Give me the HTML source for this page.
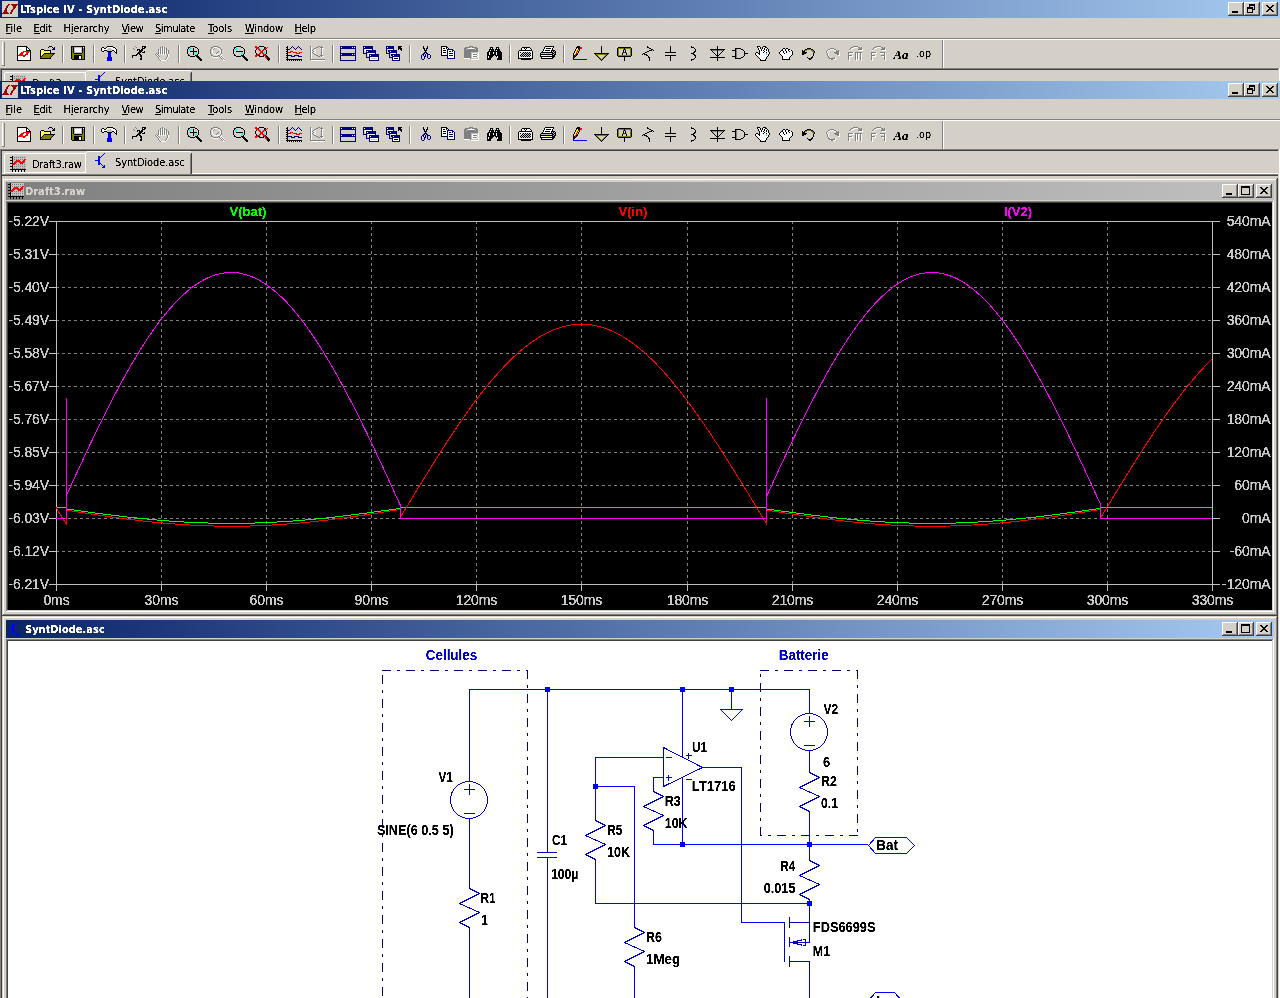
<!DOCTYPE html><html><head><meta charset="utf-8"><title>LTspice IV - SyntDiode.asc</title><style>
html,body{margin:0;padding:0;overflow:hidden}body{width:1280px;height:998px;overflow:hidden;background:#d4d0c8;position:relative}
#r{position:absolute;left:0;top:0;width:1280px;height:998px;overflow:hidden;background:#d4d0c8}
#r div,#r svg{position:absolute;display:block}
#r svg{overflow:hidden}
u{text-decoration:underline;text-underline-offset:1px}
.t{filter:url(#thr)}
</style></head><body><div id="r">
<svg width="0" height="0" style="left:0;top:0"><filter id="thr" color-interpolation-filters="sRGB"><feComponentTransfer><feFuncA type="linear" slope="3" intercept="-0.75"/></feComponentTransfer></filter><filter id="thr2" color-interpolation-filters="sRGB"><feComponentTransfer><feFuncA type="linear" slope="4" intercept="-0.7"/></feComponentTransfer></filter></svg>
<div style="left:0;top:0;width:1280px;height:81px;overflow:hidden"><div style="left:0px;top:0px;width:1280px;height:18px;background:linear-gradient(to right,#0a246a 0%,#a6caf0 100%);"></div><svg style="left:2px;top:1px" width="16" height="16" viewBox="0 0 16 16"><g shape-rendering="crispEdges"><rect x="0" y="0" width="16" height="16" fill="#d4d0c8"/></g><g shape-rendering="crispEdges"><path d="M6 3h2v1h-2zM9 3h7v1h-7zM5 4h2v1h-2zM10 4h5v1h-5zM4 5h2v1h-2zM11 5h3v1h-3zM4 6h2v1h-2zM11 6h3v1h-3zM3 7h2v1h-2zM11 7h2v1h-2zM3 8h2v1h-2zM10 8h2v1h-2zM2 9h3v1h-3zM9 9h2v1h-2zM2 10h3v1h-3zM9 10h2v1h-2zM1 11h5v1h-5zM8 11h2v1h-2zM0 12h7v1h-7zM8 12h2v1h-2z" fill="#a00000"/></g></svg><div class="t" style="left:20px;top:3px;font-family:'DejaVu Sans Condensed','DejaVu Sans','Liberation Sans',sans-serif;font-size:11px;color:#fff;white-space:nowrap;line-height:14px;height:14px;font-weight:bold;letter-spacing:0.12px;">LTspice IV - SyntDiode.asc</div><div style="left:1228px;top:2px;width:16px;height:14px;background:#d4d0c8;box-shadow:inset -1px -1px 0 #404040,inset 1px 1px 0 #fff,inset -2px -2px 0 #808080;"><div style="left:4px;top:9px;width:6px;height:2px;background:#000"></div></div><div style="left:1244px;top:2px;width:16px;height:14px;background:#d4d0c8;box-shadow:inset -1px -1px 0 #404040,inset 1px 1px 0 #fff,inset -2px -2px 0 #808080;"><div style="left:5px;top:2px;width:6px;height:6px;box-sizing:border-box;border:1px solid #000;border-top-width:2px"></div><div style="left:3px;top:5px;width:6px;height:6px;box-sizing:border-box;border:1px solid #000;border-top-width:2px;background:#d4d0c8"></div></div><div style="left:1262px;top:2px;width:16px;height:14px;background:#d4d0c8;box-shadow:inset -1px -1px 0 #404040,inset 1px 1px 0 #fff,inset -2px -2px 0 #808080;"><svg style="left:4px;top:3px" width="8" height="7" viewBox="0 0 8 7" shape-rendering="crispEdges"><path d="M0 0h2v1h1v1h2v-1h1v-1h2v1h-1v1h-1v1h-1v1h1v1h1v1h1v1h-2v-1h-1v-1h-2v1h-1v1h-2v-1h1v-1h1v-1h1v-1h-1v-1h-1v-1h-1z" fill="#000"/></svg></div><div class="t" style="left:5.5px;top:22px;font-family:'DejaVu Sans Condensed','DejaVu Sans','Liberation Sans',sans-serif;font-size:11px;color:#000;white-space:nowrap;line-height:14px;height:14px;">File</div><div style="left:6px;top:33px;width:5px;height:1px;background:#000;"></div><div class="t" style="left:33.5px;top:22px;font-family:'DejaVu Sans Condensed','DejaVu Sans','Liberation Sans',sans-serif;font-size:11px;color:#000;white-space:nowrap;line-height:14px;height:14px;letter-spacing:-0.3px;">Edit</div><div style="left:34px;top:33px;width:6px;height:1px;background:#000;"></div><div class="t" style="left:63.5px;top:22px;font-family:'DejaVu Sans Condensed','DejaVu Sans','Liberation Sans',sans-serif;font-size:11px;color:#000;white-space:nowrap;line-height:14px;height:14px;letter-spacing:-0.22px;">Hierarchy</div><div style="left:71px;top:33px;width:2px;height:1px;background:#000;"></div><div class="t" style="left:121.5px;top:22px;font-family:'DejaVu Sans Condensed','DejaVu Sans','Liberation Sans',sans-serif;font-size:11px;color:#000;white-space:nowrap;line-height:14px;height:14px;letter-spacing:-0.45px;">View</div><div style="left:122px;top:33px;width:6px;height:1px;background:#000;"></div><div class="t" style="left:155px;top:22px;font-family:'DejaVu Sans Condensed','DejaVu Sans','Liberation Sans',sans-serif;font-size:11px;color:#000;white-space:nowrap;line-height:14px;height:14px;letter-spacing:-0.5px;">Simulate</div><div style="left:155px;top:33px;width:6px;height:1px;background:#000;"></div><div class="t" style="left:208px;top:22px;font-family:'DejaVu Sans Condensed','DejaVu Sans','Liberation Sans',sans-serif;font-size:11px;color:#000;white-space:nowrap;line-height:14px;height:14px;">Tools</div><div style="left:208px;top:33px;width:6px;height:1px;background:#000;"></div><div class="t" style="left:245px;top:22px;font-family:'DejaVu Sans Condensed','DejaVu Sans','Liberation Sans',sans-serif;font-size:11px;color:#000;white-space:nowrap;line-height:14px;height:14px;letter-spacing:-0.2px;">Window</div><div style="left:245px;top:33px;width:9px;height:1px;background:#000;"></div><div class="t" style="left:294.5px;top:22px;font-family:'DejaVu Sans Condensed','DejaVu Sans','Liberation Sans',sans-serif;font-size:11px;color:#000;white-space:nowrap;line-height:14px;height:14px;letter-spacing:-0.35px;">Help</div><div style="left:295px;top:33px;width:7px;height:1px;background:#000;"></div><div style="left:0px;top:38px;width:1280px;height:1px;background:#808080;"></div><div style="left:0px;top:39px;width:1280px;height:1px;background:#fff;"></div><div style="left:2px;top:42px;width:1px;height:23px;background:#fff;"></div><div style="left:3px;top:42px;width:1px;height:23px;background:#d4d0c8;"></div><div style="left:4px;top:42px;width:1px;height:23px;background:#808080;"></div><div style="left:2px;top:65px;width:3px;height:1px;background:#808080;"></div><svg style="left:16px;top:46px" width="16" height="16" viewBox="0 0 16 16"><g shape-rendering="crispEdges"><path d="M1 0h10v1h-10zM1 1h1v1h-1zM10 1h2v1h-2zM1 2h1v1h-1zM10 2h1v1h-1zM12 2h1v1h-1zM1 3h1v1h-1zM10 3h1v1h-1zM13 3h1v1h-1zM1 4h1v1h-1zM10 4h5v1h-5zM1 5h1v1h-1zM14 5h1v1h-1zM1 6h1v1h-1zM14 6h1v1h-1zM1 7h1v1h-1zM14 7h1v1h-1zM1 8h1v1h-1zM14 8h1v1h-1zM1 9h1v1h-1zM14 9h1v1h-1zM1 10h1v1h-1zM14 10h1v1h-1zM1 11h1v1h-1zM14 11h1v1h-1zM1 12h1v1h-1zM14 12h1v1h-1zM1 13h1v1h-1zM14 13h1v1h-1zM1 14h14v1h-14z" fill="#000"/><path d="M2 1h8v1h-8zM2 2h8v1h-8zM11 2h1v1h-1zM2 3h8v1h-8zM11 3h2v1h-2zM2 4h8v1h-8zM2 5h5v1h-5zM2 6h3v1h-3zM8 6h2v1h-2zM13 6h1v1h-1zM2 7h2v1h-2zM7 7h3v1h-3zM12 7h2v1h-2zM2 8h1v1h-1zM7 8h2v1h-2zM12 8h2v1h-2zM10 9h4v1h-4zM2 10h5v1h-5zM9 10h5v1h-5zM2 11h12v1h-12zM2 12h12v1h-12zM2 13h12v1h-12z" fill="#fff"/><path d="M7 5h7v1h-7zM5 6h3v1h-3zM10 6h3v1h-3zM4 7h3v1h-3zM10 7h2v1h-2zM3 8h4v1h-4zM9 8h3v1h-3zM2 9h8v1h-8zM7 10h2v1h-2z" fill="#ff0000"/></g></svg><svg style="left:39px;top:46px" width="16" height="16" viewBox="0 0 16 16"><g shape-rendering="crispEdges"><path d="M10 0h3v1h-3zM9 1h1v1h-1zM13 1h1v1h-1zM15 1h1v1h-1zM14 2h2v1h-2zM2 3h3v1h-3zM13 3h3v1h-3zM1 4h1v1h-1zM5 4h7v1h-7zM1 5h1v1h-1zM11 5h1v1h-1zM1 6h1v1h-1zM11 6h1v1h-1zM1 7h1v1h-1zM5 7h11v1h-11zM1 8h1v1h-1zM4 8h1v1h-1zM14 8h1v1h-1zM1 9h1v1h-1zM3 9h1v1h-1zM13 9h1v1h-1zM1 10h2v1h-2zM12 10h1v1h-1zM1 11h1v1h-1zM11 11h1v1h-1zM1 12h11v1h-11z" fill="#000"/><path d="M2 4h1v1h-1zM4 4h1v1h-1zM3 5h1v1h-1zM5 5h1v1h-1zM7 5h1v1h-1zM9 5h1v1h-1zM2 6h1v1h-1zM4 6h1v1h-1zM6 6h1v1h-1zM8 6h1v1h-1zM10 6h1v1h-1zM3 7h1v1h-1zM2 8h1v1h-1z" fill="#ffffc0"/><path d="M3 4h1v1h-1zM2 5h1v1h-1zM4 5h1v1h-1zM6 5h1v1h-1zM8 5h1v1h-1zM10 5h1v1h-1zM3 6h1v1h-1zM5 6h1v1h-1zM7 6h1v1h-1zM9 6h1v1h-1zM2 7h1v1h-1zM4 7h1v1h-1zM3 8h1v1h-1zM2 9h1v1h-1z" fill="#ffff00"/><path d="M5 8h9v1h-9zM4 9h9v1h-9zM3 10h9v1h-9zM2 11h9v1h-9z" fill="#808000"/></g></svg><div style="left:62px;top:45px;width:1px;height:18px;background:#808080;"></div><div style="left:63px;top:45px;width:1px;height:18px;background:#fff;"></div><svg style="left:70px;top:46px" width="16" height="16" viewBox="0 0 16 16"><g shape-rendering="crispEdges"><path d="M1 0h14v1h-14zM1 1h1v1h-1zM3 1h1v1h-1zM12 1h1v1h-1zM14 1h1v1h-1zM1 2h1v1h-1zM3 2h1v1h-1zM12 2h1v1h-1zM14 2h1v1h-1zM1 3h1v1h-1zM3 3h1v1h-1zM12 3h1v1h-1zM14 3h1v1h-1zM1 4h1v1h-1zM3 4h1v1h-1zM12 4h1v1h-1zM14 4h1v1h-1zM1 5h1v1h-1zM3 5h1v1h-1zM12 5h1v1h-1zM14 5h1v1h-1zM1 6h1v1h-1zM3 6h1v1h-1zM12 6h1v1h-1zM14 6h1v1h-1zM1 7h1v1h-1zM4 7h8v1h-8zM14 7h1v1h-1zM1 8h1v1h-1zM14 8h1v1h-1zM1 9h1v1h-1zM4 9h8v1h-8zM14 9h1v1h-1zM1 10h1v1h-1zM4 10h5v1h-5zM11 10h1v1h-1zM14 10h1v1h-1zM1 11h1v1h-1zM4 11h5v1h-5zM11 11h1v1h-1zM14 11h1v1h-1zM1 12h1v1h-1zM4 12h5v1h-5zM11 12h1v1h-1zM14 12h1v1h-1zM2 13h13v1h-13z" fill="#000"/><path d="M2 1h1v1h-1zM2 2h1v1h-1zM13 2h1v1h-1zM2 3h1v1h-1zM13 3h1v1h-1zM2 4h1v1h-1zM13 4h1v1h-1zM2 5h1v1h-1zM13 5h1v1h-1zM2 6h1v1h-1zM13 6h1v1h-1zM2 7h2v1h-2zM12 7h2v1h-2zM2 8h12v1h-12zM2 9h2v1h-2zM12 9h2v1h-2zM2 10h2v1h-2zM12 10h2v1h-2zM2 11h2v1h-2zM12 11h2v1h-2zM2 12h2v1h-2zM12 12h2v1h-2z" fill="#808000"/><path d="M4 1h8v1h-8zM4 2h1v1h-1zM11 2h1v1h-1zM4 3h1v1h-1zM11 3h1v1h-1zM4 4h1v1h-1zM11 4h1v1h-1zM4 5h1v1h-1zM11 5h1v1h-1zM4 6h8v1h-8z" fill="#c0c0c0"/><path d="M13 1h1v1h-1zM5 2h6v1h-6zM5 3h6v1h-6zM5 4h6v1h-6zM5 5h6v1h-6zM9 10h2v1h-2zM9 11h2v1h-2zM9 12h2v1h-2z" fill="#fff"/></g></svg><div style="left:93px;top:45px;width:1px;height:18px;background:#808080;"></div><div style="left:94px;top:45px;width:1px;height:18px;background:#fff;"></div><svg style="left:101px;top:46px" width="16" height="16" viewBox="0 0 16 16"><g shape-rendering="crispEdges"><path d="M6 0h6v1h-6zM1 1h2v1h-2zM5 1h1v1h-1zM12 1h2v1h-2zM0 2h1v1h-1zM3 2h2v1h-2zM14 2h1v1h-1zM0 3h1v1h-1zM15 3h1v1h-1zM0 4h1v1h-1zM3 4h3v1h-3zM11 4h2v1h-2zM15 4h1v1h-1zM1 5h2v1h-2zM6 5h5v1h-5zM13 5h1v1h-1zM15 5h1v1h-1zM14 6h2v1h-2zM15 7h1v1h-1z" fill="#000"/><path d="M6 1h6v1h-6zM1 2h2v1h-2zM5 2h2v1h-2zM10 2h4v1h-4zM1 3h5v1h-5zM11 3h4v1h-4zM1 4h2v1h-2zM13 4h2v1h-2zM14 5h1v1h-1z" fill="#fff"/><path d="M7 2h3v1h-3zM6 3h5v1h-5zM6 4h5v1h-5z" fill="#c0c0c0"/><path d="M7 6h3v1h-3zM7 7h3v1h-3zM7 8h3v1h-3zM7 9h3v1h-3zM7 10h3v1h-3zM6 11h5v1h-5zM6 12h5v1h-5zM6 13h5v1h-5zM6 14h5v1h-5z" fill="#0000ff"/></g></svg><div style="left:124px;top:45px;width:1px;height:18px;background:#808080;"></div><div style="left:125px;top:45px;width:1px;height:18px;background:#fff;"></div><svg style="left:132px;top:46px" width="16" height="16" viewBox="0 0 16 16"><g shape-rendering="crispEdges"><path d="M3 0h1v1h-1zM4 1h1v1h-1zM1 2h1v1h-1zM2 3h1v1h-1z" fill="#808080"/><path d="M10 0h4v1h-4zM10 1h1v1h-1zM12 1h2v1h-2zM10 2h3v1h-3zM5 3h3v1h-3zM9 3h2v1h-2zM5 4h1v1h-1zM7 4h4v1h-4zM7 5h3v1h-3zM12 5h1v1h-1zM6 6h3v1h-3zM10 6h3v1h-3zM5 7h3v1h-3zM4 8h2v1h-2zM7 8h2v1h-2zM0 9h5v1h-5zM8 9h2v1h-2zM0 10h1v1h-1zM8 10h2v1h-2zM0 11h1v1h-1zM9 11h1v1h-1zM8 12h2v1h-2zM8 13h2v1h-2z" fill="#000"/><path d="M11 1h1v1h-1z" fill="#fff"/></g></svg><svg style="left:155px;top:46px" width="16" height="16" viewBox="0 0 16 16"><g shape-rendering="crispEdges"><path d="M7 0h1v1h-1zM5 1h1v1h-1zM7 1h1v1h-1zM9 1h1v1h-1zM5 2h1v1h-1zM7 2h1v1h-1zM9 2h1v1h-1zM11 2h1v1h-1zM3 3h1v1h-1zM5 3h1v1h-1zM7 3h1v1h-1zM9 3h1v1h-1zM11 3h1v1h-1zM3 4h1v1h-1zM5 4h1v1h-1zM7 4h1v1h-1zM9 4h1v1h-1zM11 4h1v1h-1zM13 4h1v1h-1zM3 5h1v1h-1zM5 5h1v1h-1zM7 5h1v1h-1zM9 5h1v1h-1zM11 5h1v1h-1zM13 5h1v1h-1zM3 6h1v1h-1zM5 6h1v1h-1zM7 6h1v1h-1zM9 6h1v1h-1zM11 6h1v1h-1zM13 6h1v1h-1zM1 7h1v1h-1zM3 7h1v1h-1zM5 7h1v1h-1zM7 7h1v1h-1zM9 7h1v1h-1zM11 7h1v1h-1zM13 7h1v1h-1zM0 8h1v1h-1zM2 8h1v1h-1zM12 8h1v1h-1zM1 9h1v1h-1zM3 9h1v1h-1zM12 9h1v1h-1zM2 10h1v1h-1zM4 10h1v1h-1zM12 10h1v1h-1zM3 11h1v1h-1zM11 11h1v1h-1zM3 12h1v1h-1zM11 12h1v1h-1zM4 13h1v1h-1zM10 13h1v1h-1zM5 14h1v1h-1z" fill="#808080"/><path d="M8 1h1v1h-1zM6 2h1v1h-1zM8 2h1v1h-1zM6 3h1v1h-1zM8 3h1v1h-1zM10 3h1v1h-1zM4 4h1v1h-1zM6 4h1v1h-1zM8 4h1v1h-1zM10 4h1v1h-1zM4 5h1v1h-1zM6 5h1v1h-1zM8 5h1v1h-1zM10 5h1v1h-1zM12 5h1v1h-1zM4 6h1v1h-1zM6 6h1v1h-1zM8 6h1v1h-1zM10 6h1v1h-1zM12 6h1v1h-1zM4 7h1v1h-1zM6 7h1v1h-1zM8 7h1v1h-1zM10 7h1v1h-1zM12 7h1v1h-1zM1 8h1v1h-1zM4 8h1v1h-1zM6 8h1v1h-1zM8 8h1v1h-1zM10 8h1v1h-1zM13 8h1v1h-1zM2 9h1v1h-1zM13 9h1v1h-1zM3 10h1v1h-1zM13 10h1v1h-1zM4 11h1v1h-1zM12 11h1v1h-1zM4 12h1v1h-1zM12 12h1v1h-1zM5 13h1v1h-1zM11 13h1v1h-1zM6 14h5v1h-5z" fill="#fff"/></g></svg><div style="left:178px;top:45px;width:1px;height:18px;background:#808080;"></div><div style="left:179px;top:45px;width:1px;height:18px;background:#fff;"></div><svg style="left:186px;top:46px" width="16" height="16" viewBox="0 0 16 16"><g transform="translate(1,0)"><g shape-rendering="crispEdges"><path d="M3 0h5v1h-5zM1 1h2v1h-2zM8 1h2v1h-2zM1 2h1v1h-1zM6 2h1v1h-1zM10 2h1v1h-1zM0 3h1v1h-1zM6 3h1v1h-1zM11 3h1v1h-1zM0 4h1v1h-1zM6 4h1v1h-1zM11 4h1v1h-1zM0 5h1v1h-1zM3 5h7v1h-7zM11 5h1v1h-1zM0 6h1v1h-1zM6 6h1v1h-1zM11 6h1v1h-1zM0 7h1v1h-1zM6 7h1v1h-1zM11 7h1v1h-1zM1 8h1v1h-1zM6 8h1v1h-1zM10 8h1v1h-1zM1 9h2v1h-2zM8 9h3v1h-3zM3 10h5v1h-5zM9 10h3v1h-3zM10 11h3v1h-3zM11 12h3v1h-3zM12 13h3v1h-3zM13 14h2v1h-2z" fill="#000"/><path d="M3 2h2v1h-2zM2 3h2v1h-2zM2 4h1v1h-1zM9 6h1v1h-1zM8 7h2v1h-2zM8 8h1v1h-1z" fill="#00ffff"/></g></g></svg><svg style="left:209px;top:46px" width="16" height="16" viewBox="0 0 16 16"><g transform="translate(1,0)"><g shape-rendering="crispEdges"><path d="M3 0h5v1h-5zM1 1h2v1h-2zM8 1h2v1h-2zM1 2h1v1h-1zM4 2h1v1h-1zM10 2h1v1h-1zM0 3h1v1h-1zM3 3h1v1h-1zM11 3h1v1h-1zM0 4h1v1h-1zM11 4h1v1h-1zM0 5h1v1h-1zM8 5h1v1h-1zM11 5h1v1h-1zM0 6h1v1h-1zM7 6h1v1h-1zM11 6h1v1h-1zM0 7h1v1h-1zM6 7h1v1h-1zM11 7h1v1h-1zM1 8h1v1h-1zM10 8h1v1h-1zM1 9h2v1h-2zM8 9h2v1h-2zM3 10h5v1h-5zM9 10h1v1h-1zM11 10h1v1h-1zM10 11h1v1h-1zM12 11h1v1h-1zM11 12h1v1h-1zM13 12h1v1h-1zM12 13h1v1h-1zM14 13h1v1h-1z" fill="#808080"/><path d="M4 1h3v1h-3zM3 2h1v1h-1zM8 2h1v1h-1zM2 3h1v1h-1zM9 3h1v1h-1zM2 4h1v1h-1zM10 4h1v1h-1zM2 5h1v1h-1zM10 5h1v1h-1zM2 6h1v1h-1zM10 6h1v1h-1zM3 7h1v1h-1zM9 7h1v1h-1zM4 8h5v1h-5zM11 8h1v1h-1zM10 9h2v1h-2zM2 10h1v1h-1zM10 10h1v1h-1zM12 10h1v1h-1zM3 11h5v1h-5zM11 11h1v1h-1zM13 11h1v1h-1zM12 12h1v1h-1zM14 12h1v1h-1zM13 13h1v1h-1zM13 14h2v1h-2z" fill="#fff"/></g></g></svg><svg style="left:232px;top:46px" width="16" height="16" viewBox="0 0 16 16"><g transform="translate(1,0)"><g shape-rendering="crispEdges"><path d="M3 0h5v1h-5zM1 1h2v1h-2zM8 1h2v1h-2zM1 2h1v1h-1zM10 2h1v1h-1zM0 3h1v1h-1zM11 3h1v1h-1zM0 4h1v1h-1zM11 4h1v1h-1zM0 5h1v1h-1zM3 5h7v1h-7zM11 5h1v1h-1zM0 6h1v1h-1zM11 6h1v1h-1zM0 7h1v1h-1zM11 7h1v1h-1zM1 8h1v1h-1zM10 8h1v1h-1zM1 9h2v1h-2zM8 9h3v1h-3zM3 10h5v1h-5zM9 10h3v1h-3zM10 11h3v1h-3zM11 12h3v1h-3zM12 13h3v1h-3zM13 14h2v1h-2z" fill="#000"/><path d="M3 2h2v1h-2zM2 3h2v1h-2zM2 4h1v1h-1zM9 6h1v1h-1zM8 7h2v1h-2zM8 8h1v1h-1z" fill="#00ffff"/></g></g></svg><svg style="left:255px;top:46px" width="16" height="16" viewBox="0 0 16 16"><g shape-rendering="crispEdges"><path d="M0 0h2v1h-2zM0 1h3v1h-3zM12 1h1v1h-1zM1 2h3v1h-3zM10 2h2v1h-2zM3 3h2v1h-2zM8 3h2v1h-2zM4 4h2v1h-2zM7 4h2v1h-2zM5 5h3v1h-3zM5 6h3v1h-3zM4 7h2v1h-2zM7 7h2v1h-2zM2 8h3v1h-3zM8 8h2v1h-2zM0 9h3v1h-3zM9 9h2v1h-2zM0 10h2v1h-2zM10 10h1v1h-1zM10 11h2v1h-2zM11 12h1v1h-1z" fill="#ff0000"/><path d="M4 0h5v1h-5zM3 1h1v1h-1zM9 1h2v1h-2zM9 2h1v1h-1zM1 3h1v1h-1zM10 3h1v1h-1zM0 4h1v1h-1zM11 4h1v1h-1zM0 5h1v1h-1zM11 5h1v1h-1zM0 6h1v1h-1zM11 6h1v1h-1zM1 7h1v1h-1zM11 7h1v1h-1zM1 8h1v1h-1zM10 8h1v1h-1zM3 9h2v1h-2zM8 9h1v1h-1zM11 9h1v1h-1zM4 10h5v1h-5zM11 10h2v1h-2zM12 11h2v1h-2zM12 12h3v1h-3zM12 13h3v1h-3zM13 14h1v1h-1z" fill="#000"/><path d="M4 2h2v1h-2zM5 3h1v1h-1zM9 5h1v1h-1zM8 6h2v1h-2zM9 7h1v1h-1z" fill="#00ffff"/></g></svg><div style="left:278px;top:45px;width:1px;height:18px;background:#808080;"></div><div style="left:279px;top:45px;width:1px;height:18px;background:#fff;"></div><svg style="left:286px;top:46px" width="16" height="16" viewBox="0 0 16 16"><g shape-rendering="crispEdges"><path d="M1 0h1v1h-1zM0 1h2v1h-2zM1 2h1v1h-1zM0 3h2v1h-2zM1 4h1v1h-1zM0 5h2v1h-2zM1 6h1v1h-1zM0 7h2v1h-2zM1 8h1v1h-1zM0 9h2v1h-2zM1 10h1v1h-1zM0 11h2v1h-2zM1 12h1v1h-1zM0 13h16v1h-16zM1 14h1v1h-1zM3 14h1v1h-1zM5 14h1v1h-1zM7 14h1v1h-1zM9 14h1v1h-1zM11 14h1v1h-1zM13 14h1v1h-1zM15 14h1v1h-1z" fill="#000"/><path d="M6 0h1v1h-1zM12 0h1v1h-1zM5 1h1v1h-1zM7 1h1v1h-1zM11 1h1v1h-1zM13 1h1v1h-1zM4 2h1v1h-1zM8 2h1v1h-1zM10 2h1v1h-1zM14 2h1v1h-1zM2 3h2v1h-2zM9 3h1v1h-1zM15 3h1v1h-1zM2 9h4v1h-4zM8 9h5v1h-5zM5 10h4v1h-4zM12 10h4v1h-4z" fill="#000080"/><path d="M4 5h3v1h-3zM2 6h3v1h-3zM7 6h4v1h-4zM13 6h3v1h-3zM10 7h4v1h-4z" fill="#ff0000"/></g></svg><svg style="left:309px;top:46px" width="16" height="16" viewBox="0 0 16 16"><g shape-rendering="crispEdges"><path d="M1 0h1v1h-1zM9 0h2v1h-2zM12 0h1v1h-1zM1 1h1v1h-1zM7 1h2v1h-2zM11 1h3v1h-3zM1 2h1v1h-1zM5 2h2v1h-2zM12 2h1v1h-1zM1 3h1v1h-1zM4 3h1v1h-1zM12 3h1v1h-1zM1 4h1v1h-1zM3 4h1v1h-1zM12 4h1v1h-1zM1 5h1v1h-1zM4 5h1v1h-1zM12 5h1v1h-1zM1 6h1v1h-1zM3 6h1v1h-1zM12 6h1v1h-1zM1 7h1v1h-1zM4 7h1v1h-1zM12 7h1v1h-1zM1 8h1v1h-1zM5 8h2v1h-2zM12 8h1v1h-1zM1 9h1v1h-1zM7 9h2v1h-2zM11 9h3v1h-3zM1 10h1v1h-1zM9 10h2v1h-2zM12 10h1v1h-1zM1 11h1v1h-1zM1 12h1v1h-1zM1 13h15v1h-15z" fill="#808080"/><path d="M2 1h1v1h-1zM2 2h1v1h-1zM11 2h1v1h-1zM13 2h2v1h-2zM2 3h1v1h-1zM6 3h1v1h-1zM13 3h1v1h-1zM2 4h1v1h-1zM5 4h1v1h-1zM13 4h1v1h-1zM2 5h1v1h-1zM6 5h1v1h-1zM13 5h1v1h-1zM2 6h1v1h-1zM5 6h1v1h-1zM13 6h1v1h-1zM2 7h1v1h-1zM6 7h1v1h-1zM13 7h1v1h-1zM2 8h1v1h-1zM13 8h1v1h-1zM2 9h1v1h-1zM2 10h1v1h-1zM13 10h2v1h-2zM2 11h1v1h-1zM12 11h1v1h-1zM2 12h1v1h-1zM2 14h14v1h-14z" fill="#fff"/></g></svg><div style="left:332px;top:45px;width:1px;height:18px;background:#808080;"></div><div style="left:333px;top:45px;width:1px;height:18px;background:#fff;"></div><svg style="left:340px;top:46px" width="16" height="16" viewBox="0 0 16 16"><g shape-rendering="crispEdges"><path d="M0 0h16v1h-16zM0 1h1v1h-1zM2 1h10v1h-10zM13 1h1v1h-1zM15 1h1v1h-1zM0 2h16v1h-16zM0 3h1v1h-1zM15 3h1v1h-1zM0 4h1v1h-1zM15 4h1v1h-1zM0 5h1v1h-1zM15 5h1v1h-1zM0 6h1v1h-1zM15 6h1v1h-1zM0 7h16v1h-16zM0 8h1v1h-1zM2 8h10v1h-10zM13 8h1v1h-1zM15 8h1v1h-1zM0 9h16v1h-16zM0 10h1v1h-1zM15 10h1v1h-1zM0 11h1v1h-1zM15 11h1v1h-1zM0 12h1v1h-1zM15 12h1v1h-1zM0 13h1v1h-1zM15 13h1v1h-1zM0 14h16v1h-16z" fill="#000080"/><path d="M1 1h1v1h-1zM12 1h1v1h-1zM14 1h1v1h-1zM1 8h1v1h-1zM12 8h1v1h-1zM14 8h1v1h-1z" fill="#fff"/></g></svg><svg style="left:363px;top:46px" width="16" height="16" viewBox="0 0 16 16"><g shape-rendering="crispEdges"><path d="M0 0h10v1h-10zM0 1h1v1h-1zM2 1h8v1h-8zM0 2h10v1h-10zM0 3h1v1h-1zM9 3h1v1h-1zM0 4h1v1h-1zM3 4h10v1h-10zM0 5h1v1h-1zM3 5h1v1h-1zM5 5h8v1h-8zM0 6h1v1h-1zM3 6h10v1h-10zM0 7h4v1h-4zM12 7h1v1h-1zM3 8h1v1h-1zM6 8h10v1h-10zM3 9h1v1h-1zM6 9h1v1h-1zM8 9h8v1h-8zM3 10h1v1h-1zM6 10h10v1h-10zM3 11h4v1h-4zM15 11h1v1h-1zM6 12h1v1h-1zM15 12h1v1h-1zM6 13h1v1h-1zM15 13h1v1h-1zM6 14h10v1h-10z" fill="#000080"/><path d="M1 1h1v1h-1zM2 3h7v1h-7zM2 4h1v1h-1zM2 5h1v1h-1zM4 5h1v1h-1zM5 7h7v1h-7zM5 8h1v1h-1zM5 9h1v1h-1zM7 9h1v1h-1zM7 11h8v1h-8zM7 12h1v1h-1zM14 12h1v1h-1zM7 13h8v1h-8z" fill="#fff"/></g></svg><svg style="left:386px;top:46px" width="16" height="16" viewBox="0 0 16 16"><g shape-rendering="crispEdges"><path d="M0 0h8v1h-8zM0 1h1v1h-1zM2 1h6v1h-6zM0 2h8v1h-8zM0 3h1v1h-1zM7 3h1v1h-1zM0 4h1v1h-1zM3 4h8v1h-8zM0 5h1v1h-1zM3 5h1v1h-1zM5 5h6v1h-6zM0 6h1v1h-1zM3 6h8v1h-8zM0 7h4v1h-4zM10 7h1v1h-1zM3 8h1v1h-1zM6 8h8v1h-8zM3 9h1v1h-1zM6 9h1v1h-1zM8 9h6v1h-6zM3 10h1v1h-1zM6 10h8v1h-8zM3 11h4v1h-4zM13 11h1v1h-1zM6 12h1v1h-1zM13 12h1v1h-1zM6 13h1v1h-1zM13 13h1v1h-1zM6 14h8v1h-8z" fill="#000080"/><path d="M12 0h4v1h-4zM12 1h3v1h-3zM12 2h4v1h-4zM12 3h1v1h-1zM14 3h2v1h-2zM2 4h1v1h-1zM15 4h1v1h-1zM2 5h1v1h-1zM5 8h1v1h-1zM5 9h1v1h-1zM8 12h4v1h-4z" fill="#000"/><path d="M1 1h1v1h-1zM2 3h5v1h-5zM4 5h1v1h-1zM5 7h5v1h-5zM7 9h1v1h-1zM7 11h6v1h-6zM7 12h1v1h-1zM12 12h1v1h-1zM7 13h6v1h-6z" fill="#fff"/></g></svg><div style="left:409px;top:45px;width:1px;height:18px;background:#808080;"></div><div style="left:410px;top:45px;width:1px;height:18px;background:#fff;"></div><svg style="left:417px;top:46px" width="16" height="16" viewBox="0 0 16 16"><g shape-rendering="crispEdges"><path d="M6 0h1v1h-1zM10 0h1v1h-1zM6 1h1v1h-1zM10 1h1v1h-1zM6 2h2v1h-2zM9 2h2v1h-2zM7 3h1v1h-1zM9 3h1v1h-1zM7 4h3v1h-3zM8 5h1v1h-1zM8 6h1v1h-1z" fill="#000"/><path d="M7 6h1v1h-1zM9 6h1v1h-1zM6 7h2v1h-2zM9 7h2v1h-2zM5 8h2v1h-2zM8 8h1v1h-1zM10 8h3v1h-3zM4 9h1v1h-1zM6 9h1v1h-1zM8 9h1v1h-1zM10 9h1v1h-1zM13 9h1v1h-1zM4 10h1v1h-1zM7 10h2v1h-2zM10 10h1v1h-1zM13 10h1v1h-1zM4 11h1v1h-1zM7 11h1v1h-1zM10 11h1v1h-1zM13 11h1v1h-1zM4 12h1v1h-1zM7 12h1v1h-1zM11 12h2v1h-2zM5 13h2v1h-2z" fill="#000080"/></g></svg><svg style="left:440px;top:46px" width="16" height="16" viewBox="0 0 16 16"><g shape-rendering="crispEdges"><path d="M1 0h6v1h-6zM1 1h1v1h-1zM6 1h2v1h-2zM1 2h1v1h-1zM3 2h2v1h-2zM6 2h1v1h-1zM8 2h1v1h-1zM1 3h1v1h-1zM1 4h1v1h-1zM3 4h3v1h-3zM1 5h1v1h-1zM1 6h1v1h-1zM3 6h3v1h-3zM1 7h1v1h-1zM1 8h1v1h-1zM1 9h6v1h-6z" fill="#000"/><path d="M2 1h4v1h-4zM2 2h1v1h-1zM5 2h1v1h-1zM7 2h1v1h-1zM2 3h5v1h-5zM2 4h1v1h-1zM6 4h1v1h-1zM8 4h4v1h-4zM2 5h5v1h-5zM8 5h1v1h-1zM11 5h1v1h-1zM13 5h1v1h-1zM2 6h1v1h-1zM6 6h1v1h-1zM8 6h6v1h-6zM2 7h5v1h-5zM8 7h1v1h-1zM13 7h1v1h-1zM2 8h5v1h-5zM8 8h6v1h-6zM8 9h1v1h-1zM13 9h1v1h-1zM8 10h6v1h-6zM8 11h6v1h-6z" fill="#fff"/><path d="M7 3h6v1h-6zM7 4h1v1h-1zM12 4h2v1h-2zM7 5h1v1h-1zM9 5h2v1h-2zM12 5h1v1h-1zM14 5h1v1h-1zM7 6h1v1h-1zM14 6h1v1h-1zM7 7h1v1h-1zM9 7h4v1h-4zM14 7h1v1h-1zM7 8h1v1h-1zM14 8h1v1h-1zM7 9h1v1h-1zM9 9h4v1h-4zM14 9h1v1h-1zM7 10h1v1h-1zM14 10h1v1h-1zM7 11h1v1h-1zM14 11h1v1h-1zM7 12h8v1h-8z" fill="#000080"/></g></svg><svg style="left:463px;top:46px" width="16" height="16" viewBox="0 0 16 16"><g shape-rendering="crispEdges"><path d="M6 0h4v1h-4zM2 1h5v1h-5zM9 1h5v1h-5zM1 2h3v1h-3zM12 2h3v1h-3zM1 3h2v1h-2zM4 3h8v1h-8zM13 3h2v1h-2zM1 4h14v1h-14zM1 5h14v1h-14zM1 6h7v1h-7zM1 7h7v1h-7zM1 8h7v1h-7zM10 8h4v1h-4zM1 9h7v1h-7zM1 10h7v1h-7zM10 10h4v1h-4zM1 11h7v1h-7zM7 12h1v1h-1z" fill="#808080"/><path d="M7 1h2v1h-2zM4 2h1v1h-1zM11 2h1v1h-1zM3 3h1v1h-1zM12 3h1v1h-1zM8 6h7v1h-7zM8 7h1v1h-1zM14 7h1v1h-1zM8 8h1v1h-1zM8 9h1v1h-1zM14 9h1v1h-1zM8 10h1v1h-1zM8 11h1v1h-1zM14 11h1v1h-1zM8 12h7v1h-7z" fill="#c0c0c0"/><path d="M5 2h6v1h-6zM15 6h1v1h-1zM9 7h5v1h-5zM15 7h1v1h-1zM9 8h1v1h-1zM14 8h2v1h-2zM9 9h5v1h-5zM15 9h1v1h-1zM9 10h1v1h-1zM14 10h2v1h-2zM9 11h5v1h-5zM15 11h1v1h-1zM1 12h6v1h-6zM15 12h1v1h-1zM8 13h8v1h-8z" fill="#fff"/></g></svg><svg style="left:486px;top:46px" width="16" height="16" viewBox="0 0 16 16"><g shape-rendering="crispEdges"><path d="M4 1h3v1h-3zM10 1h3v1h-3zM4 2h1v1h-1zM6 2h1v1h-1zM10 2h1v1h-1zM12 2h1v1h-1zM3 3h5v1h-5zM9 3h5v1h-5zM3 4h1v1h-1zM5 4h3v1h-3zM9 4h1v1h-1zM11 4h3v1h-3zM2 5h13v1h-13zM1 6h2v1h-2zM4 6h3v1h-3zM8 6h2v1h-2zM11 6h5v1h-5zM1 7h2v1h-2zM4 7h3v1h-3zM8 7h2v1h-2zM11 7h5v1h-5zM1 8h2v1h-2zM4 8h6v1h-6zM11 8h5v1h-5zM1 9h7v1h-7zM9 9h7v1h-7zM1 10h1v1h-1zM3 10h4v1h-4zM10 10h1v1h-1zM12 10h4v1h-4zM1 11h1v1h-1zM3 11h3v1h-3zM12 11h4v1h-4zM1 12h4v1h-4zM11 12h5v1h-5zM1 13h4v1h-4zM11 13h5v1h-5z" fill="#000"/><path d="M5 2h1v1h-1zM11 2h1v1h-1zM4 4h1v1h-1zM10 4h1v1h-1zM3 6h1v1h-1zM7 6h1v1h-1zM10 6h1v1h-1zM3 7h1v1h-1zM7 7h1v1h-1zM10 7h1v1h-1zM3 8h1v1h-1zM10 8h1v1h-1zM2 10h1v1h-1zM11 10h1v1h-1zM2 11h1v1h-1zM11 11h1v1h-1z" fill="#fff"/></g></svg><div style="left:509px;top:45px;width:1px;height:18px;background:#808080;"></div><div style="left:510px;top:45px;width:1px;height:18px;background:#fff;"></div><svg style="left:517px;top:46px" width="16" height="16" viewBox="0 0 16 16"><g shape-rendering="crispEdges"><path d="M5 1h8v1h-8zM4 2h1v1h-1zM7 2h1v1h-1zM9 2h1v1h-1zM13 2h1v1h-1zM4 3h1v1h-1zM8 3h1v1h-1zM14 3h1v1h-1zM2 4h13v1h-13zM1 5h1v1h-1zM15 5h1v1h-1zM1 6h1v1h-1zM3 6h1v1h-1zM6 6h1v1h-1zM8 6h1v1h-1zM10 6h1v1h-1zM12 6h1v1h-1zM15 6h1v1h-1zM1 7h1v1h-1zM5 7h1v1h-1zM7 7h1v1h-1zM9 7h1v1h-1zM11 7h1v1h-1zM13 7h1v1h-1zM15 7h1v1h-1zM1 8h1v1h-1zM4 8h1v1h-1zM6 8h1v1h-1zM8 8h1v1h-1zM10 8h1v1h-1zM12 8h1v1h-1zM15 8h1v1h-1zM1 9h1v1h-1zM3 9h1v1h-1zM5 9h1v1h-1zM7 9h1v1h-1zM9 9h1v1h-1zM11 9h1v1h-1zM13 9h1v1h-1zM15 9h1v1h-1zM1 10h1v1h-1zM4 10h1v1h-1zM6 10h1v1h-1zM8 10h1v1h-1zM10 10h1v1h-1zM12 10h1v1h-1zM15 10h1v1h-1zM1 11h1v1h-1zM15 11h1v1h-1zM1 12h15v1h-15zM4 13h10v1h-10z" fill="#000"/><path d="M5 2h2v1h-2zM8 2h1v1h-1zM10 2h3v1h-3zM5 3h3v1h-3zM9 3h5v1h-5zM2 5h13v1h-13zM2 6h1v1h-1zM4 6h1v1h-1zM14 6h1v1h-1zM2 7h2v1h-2zM14 7h1v1h-1zM2 8h1v1h-1zM14 8h1v1h-1zM2 9h1v1h-1zM14 9h1v1h-1zM2 10h1v1h-1zM13 10h2v1h-2zM2 11h13v1h-13z" fill="#fff"/><path d="M5 6h1v1h-1zM7 6h1v1h-1zM9 6h1v1h-1zM11 6h1v1h-1zM13 6h1v1h-1zM4 7h1v1h-1zM6 7h1v1h-1zM8 7h1v1h-1zM10 7h1v1h-1zM12 7h1v1h-1zM3 8h1v1h-1zM5 8h1v1h-1zM7 8h1v1h-1zM9 8h1v1h-1zM11 8h1v1h-1zM13 8h1v1h-1zM4 9h1v1h-1zM6 9h1v1h-1zM8 9h1v1h-1zM10 9h1v1h-1zM12 9h1v1h-1zM3 10h1v1h-1zM5 10h1v1h-1zM7 10h1v1h-1zM9 10h1v1h-1zM11 10h1v1h-1z" fill="#c0c0c0"/></g></svg><svg style="left:540px;top:46px" width="16" height="16" viewBox="0 0 16 16"><g shape-rendering="crispEdges"><path d="M5 0h9v1h-9zM4 1h1v1h-1zM13 1h1v1h-1zM4 2h1v1h-1zM6 2h5v1h-5zM12 2h1v1h-1zM3 3h1v1h-1zM12 3h1v1h-1zM3 4h1v1h-1zM5 4h5v1h-5zM11 4h4v1h-4zM2 5h1v1h-1zM11 5h1v1h-1zM13 5h1v1h-1zM15 5h1v1h-1zM1 6h12v1h-12zM14 6h2v1h-2zM0 7h1v1h-1zM12 7h2v1h-2zM15 7h1v1h-1zM0 8h13v1h-13zM14 8h2v1h-2zM0 9h1v1h-1zM12 9h3v1h-3zM0 10h15v1h-15zM1 11h1v1h-1zM12 11h2v1h-2zM1 12h12v1h-12z" fill="#000"/><path d="M5 1h8v1h-8zM5 2h1v1h-1zM11 2h1v1h-1zM4 3h8v1h-8zM4 4h1v1h-1zM10 4h1v1h-1zM3 5h8v1h-8zM1 9h6v1h-6zM10 9h2v1h-2zM2 11h10v1h-10z" fill="#fff"/><path d="M12 5h1v1h-1zM14 5h1v1h-1zM13 6h1v1h-1zM1 7h11v1h-11zM14 7h1v1h-1zM13 8h1v1h-1z" fill="#c0c0c0"/><path d="M7 9h3v1h-3z" fill="#ffff00"/></g></svg><div style="left:563px;top:45px;width:1px;height:18px;background:#808080;"></div><div style="left:564px;top:45px;width:1px;height:18px;background:#fff;"></div><svg style="left:571px;top:46px" width="16" height="16" viewBox="0 0 16 16"><g shape-rendering="crispEdges"><path d="M6 0h3v1h-3zM5 1h4v1h-4zM5 2h1v1h-1zM7 2h2v1h-2zM4 3h1v1h-1zM8 3h1v1h-1zM4 4h1v1h-1zM8 4h1v1h-1zM3 5h1v1h-1zM7 5h1v1h-1zM3 6h1v1h-1zM7 6h1v1h-1zM2 7h1v1h-1zM6 7h1v1h-1zM2 8h1v1h-1zM5 8h2v1h-2zM2 9h2v1h-2zM5 9h1v1h-1zM2 10h3v1h-3zM2 11h2v1h-2zM2 12h1v1h-1z" fill="#000"/><path d="M9 1h2v1h-2zM9 2h2v1h-2zM7 3h1v1h-1zM6 4h1v1h-1zM6 5h1v1h-1zM5 6h1v1h-1zM5 7h1v1h-1zM4 8h1v1h-1zM4 9h1v1h-1z" fill="#ff0000"/><path d="M6 2h1v1h-1zM5 3h2v1h-2zM5 4h1v1h-1zM7 4h1v1h-1zM4 5h2v1h-2zM4 6h1v1h-1zM6 6h1v1h-1zM3 7h2v1h-2zM3 8h1v1h-1z" fill="#ffff00"/><path d="M2 13h14v1h-14z" fill="#0000ff"/></g></svg><svg style="left:594px;top:46px" width="16" height="16" viewBox="0 0 16 16"><g shape-rendering="crispEdges"><path d="M7 0h1v1h-1zM7 1h1v1h-1zM7 2h1v1h-1zM7 3h1v1h-1zM7 4h1v1h-1zM7 5h1v1h-1zM7 6h1v1h-1zM0 7h15v1h-15zM1 8h1v1h-1zM13 8h1v1h-1zM2 9h1v1h-1zM12 9h1v1h-1zM3 10h1v1h-1zM11 10h1v1h-1zM4 11h1v1h-1zM10 11h1v1h-1zM5 12h1v1h-1zM9 12h1v1h-1zM6 13h1v1h-1zM8 13h1v1h-1zM7 14h1v1h-1z" fill="#000"/><path d="M2 8h11v1h-11zM3 9h1v1h-1zM11 9h1v1h-1zM4 10h1v1h-1zM10 10h1v1h-1zM5 11h1v1h-1zM9 11h1v1h-1zM6 12h1v1h-1zM8 12h1v1h-1zM7 13h1v1h-1z" fill="#808000"/></g></svg><svg style="left:617px;top:46px" width="16" height="16" viewBox="0 0 16 16"><g shape-rendering="crispEdges"><path d="M1 1h13v1h-13zM0 2h1v1h-1zM14 2h1v1h-1zM0 3h1v1h-1zM14 3h1v1h-1zM0 4h1v1h-1zM14 4h1v1h-1zM0 5h1v1h-1zM14 5h1v1h-1zM0 6h1v1h-1zM14 6h1v1h-1zM0 7h1v1h-1zM14 7h1v1h-1zM0 8h1v1h-1zM14 8h1v1h-1zM0 9h1v1h-1zM14 9h1v1h-1zM1 10h13v1h-13zM7 11h1v1h-1zM7 12h1v1h-1zM7 13h1v1h-1zM7 14h1v1h-1z" fill="#000"/><path d="M1 2h13v1h-13zM1 3h1v1h-1zM13 3h1v1h-1zM1 4h1v1h-1zM13 4h1v1h-1zM1 5h1v1h-1zM13 5h1v1h-1zM1 6h1v1h-1zM13 6h1v1h-1zM1 7h1v1h-1zM13 7h1v1h-1zM1 8h1v1h-1zM13 8h1v1h-1zM1 9h13v1h-13z" fill="#808000"/></g><text x="7.5" y="9" text-anchor="middle" font-family="'DejaVu Sans','Liberation Sans',sans-serif" font-size="8" fill="#000" filter="url(#thr)">A</text></svg><svg style="left:640px;top:46px" width="16" height="16" viewBox="0 0 16 16"><g shape-rendering="crispEdges"><path d="M7 0h1v1h-1zM7 1h2v1h-2zM9 2h2v1h-2zM11 3h2v1h-2zM9 4h3v1h-3zM13 4h1v1h-1zM7 5h2v1h-2zM5 6h2v1h-2zM3 7h2v1h-2zM2 8h1v1h-1zM4 8h3v1h-3zM6 9h2v1h-2zM8 10h1v1h-1zM8 11h2v1h-2zM9 12h1v1h-1zM9 13h1v1h-1zM9 14h1v1h-1z" fill="#000"/></g></svg><svg style="left:663px;top:46px" width="16" height="16" viewBox="0 0 16 16"><g shape-rendering="crispEdges"><path d="M7 0h1v1h-1zM7 1h1v1h-1zM7 2h1v1h-1zM7 3h1v1h-1zM7 4h1v1h-1zM7 5h1v1h-1zM2 6h11v1h-11zM2 9h11v1h-11zM7 10h1v1h-1zM7 11h1v1h-1zM7 12h1v1h-1zM7 13h1v1h-1zM7 14h1v1h-1z" fill="#000"/></g></svg><svg style="left:686px;top:46px" width="16" height="16" viewBox="0 0 16 16"><g shape-rendering="crispEdges"><path d="M5 0h1v1h-1zM5 1h3v1h-3zM8 2h1v1h-1zM9 3h1v1h-1zM9 4h1v1h-1zM8 5h2v1h-2zM7 6h2v1h-2zM5 7h3v1h-3zM7 8h2v1h-2zM8 9h2v1h-2zM9 10h1v1h-1zM9 11h1v1h-1zM8 12h1v1h-1zM5 13h3v1h-3zM5 14h1v1h-1z" fill="#000"/></g></svg><svg style="left:709px;top:46px" width="16" height="16" viewBox="0 0 16 16"><g shape-rendering="crispEdges"><path d="M8 0h1v1h-1zM8 1h1v1h-1zM8 2h1v1h-1zM1 3h15v1h-15zM2 4h1v1h-1zM8 4h1v1h-1zM14 4h1v1h-1zM3 5h1v1h-1zM8 5h1v1h-1zM13 5h1v1h-1zM4 6h1v1h-1zM8 6h1v1h-1zM12 6h1v1h-1zM5 7h1v1h-1zM8 7h1v1h-1zM11 7h1v1h-1zM6 8h1v1h-1zM8 8h1v1h-1zM10 8h1v1h-1zM7 9h3v1h-3zM8 10h1v1h-1zM1 11h15v1h-15zM8 12h1v1h-1zM8 13h1v1h-1zM8 14h1v1h-1z" fill="#000"/><path d="M3 4h5v1h-5zM9 4h5v1h-5z" fill="#808080"/><path d="M4 5h1v1h-1zM12 5h1v1h-1z" fill="#c0c0c0"/></g></svg><svg style="left:732px;top:46px" width="16" height="16" viewBox="0 0 16 16"><g shape-rendering="crispEdges"><path d="M3 2h6v1h-6zM3 3h1v1h-1zM9 3h2v1h-2zM0 4h4v1h-4zM11 4h1v1h-1zM3 5h1v1h-1zM12 5h1v1h-1zM3 6h1v1h-1zM12 6h1v1h-1zM3 7h1v1h-1zM12 7h4v1h-4zM3 8h1v1h-1zM12 8h1v1h-1zM3 9h1v1h-1zM12 9h1v1h-1zM0 10h4v1h-4zM11 10h1v1h-1zM3 11h1v1h-1zM9 11h2v1h-2zM3 12h6v1h-6z" fill="#000"/><path d="M4 3h1v1h-1zM4 4h1v1h-1zM4 5h1v1h-1zM4 6h1v1h-1zM4 7h1v1h-1zM4 8h1v1h-1zM4 9h1v1h-1zM4 10h1v1h-1zM4 11h1v1h-1z" fill="#808080"/></g></svg><svg style="left:755px;top:46px" width="16" height="16" viewBox="0 0 16 16"><g shape-rendering="crispEdges"><path d="M2 0h3v1h-3zM8 0h3v1h-3zM2 1h1v1h-1zM5 1h1v1h-1zM7 1h1v1h-1zM10 1h2v1h-2zM3 2h1v1h-1zM5 2h1v1h-1zM7 2h1v1h-1zM9 2h1v1h-1zM12 2h1v1h-1zM3 3h1v1h-1zM6 3h1v1h-1zM9 3h1v1h-1zM11 3h1v1h-1zM13 3h1v1h-1zM4 4h1v1h-1zM6 4h1v1h-1zM8 4h1v1h-1zM11 4h1v1h-1zM13 4h1v1h-1zM4 5h1v1h-1zM9 5h1v1h-1zM13 5h1v1h-1zM1 6h2v1h-2zM4 6h1v1h-1zM8 6h1v1h-1zM11 6h1v1h-1zM14 6h1v1h-1zM0 7h1v1h-1zM3 7h2v1h-2zM14 7h1v1h-1zM0 8h1v1h-1zM4 8h1v1h-1zM13 8h1v1h-1zM1 9h1v1h-1zM13 9h1v1h-1zM2 10h1v1h-1zM12 10h1v1h-1zM3 11h1v1h-1zM11 11h1v1h-1zM4 12h1v1h-1zM11 12h1v1h-1zM5 13h1v1h-1zM10 13h1v1h-1zM5 14h6v1h-6z" fill="#000"/><path d="M3 1h2v1h-2zM8 1h2v1h-2zM4 2h1v1h-1zM8 2h1v1h-1zM10 2h2v1h-2zM4 3h2v1h-2zM7 3h2v1h-2zM10 3h1v1h-1zM12 3h1v1h-1zM5 4h1v1h-1zM7 4h1v1h-1zM9 4h2v1h-2zM12 4h1v1h-1zM5 5h4v1h-4zM10 5h3v1h-3zM5 6h3v1h-3zM9 6h2v1h-2zM12 6h2v1h-2zM1 7h2v1h-2zM5 7h6v1h-6zM12 7h2v1h-2zM1 8h3v1h-3zM5 8h6v1h-6zM12 8h1v1h-1zM2 9h11v1h-11zM3 10h9v1h-9zM4 11h7v1h-7zM5 12h6v1h-6zM6 13h4v1h-4z" fill="#fff"/><path d="M11 7h1v1h-1zM11 8h1v1h-1z" fill="#00ffff"/></g></svg><svg style="left:778px;top:46px" width="16" height="16" viewBox="0 0 16 16"><g shape-rendering="crispEdges"><path d="M5 2h2v1h-2zM8 2h2v1h-2zM4 3h1v1h-1zM7 3h1v1h-1zM10 3h2v1h-2zM3 4h2v1h-2zM7 4h1v1h-1zM10 4h1v1h-1zM13 4h1v1h-1zM2 5h1v1h-1zM5 5h1v1h-1zM8 5h1v1h-1zM11 5h1v1h-1zM14 5h1v1h-1zM1 6h1v1h-1zM5 6h1v1h-1zM8 6h1v1h-1zM14 6h1v1h-1zM1 7h1v1h-1zM6 7h1v1h-1zM14 7h1v1h-1zM2 8h1v1h-1zM14 8h1v1h-1zM3 9h1v1h-1zM13 9h1v1h-1zM4 10h1v1h-1zM12 10h1v1h-1zM4 11h1v1h-1zM11 11h1v1h-1zM4 12h1v1h-1zM11 12h1v1h-1zM4 13h8v1h-8z" fill="#000"/><path d="M5 3h2v1h-2zM8 3h2v1h-2zM5 4h2v1h-2zM8 4h2v1h-2zM11 4h2v1h-2zM3 5h2v1h-2zM6 5h2v1h-2zM9 5h2v1h-2zM12 5h2v1h-2zM2 6h3v1h-3zM6 6h2v1h-2zM9 6h5v1h-5zM2 7h4v1h-4zM7 7h7v1h-7zM3 8h11v1h-11zM4 9h9v1h-9zM5 10h7v1h-7zM5 11h6v1h-6zM5 12h6v1h-6z" fill="#fff"/></g></svg><svg style="left:801px;top:46px" width="16" height="16" viewBox="0 0 16 16"><g shape-rendering="crispEdges"><path d="M6 2h4v1h-4zM4 3h2v1h-2zM10 3h2v1h-2zM1 4h1v1h-1zM3 4h1v1h-1zM12 4h1v1h-1zM1 5h3v1h-3zM13 5h1v1h-1zM1 6h5v1h-5zM13 6h1v1h-1zM1 7h4v1h-4zM12 7h1v1h-1zM1 8h2v1h-2zM12 8h1v1h-1zM12 9h1v1h-1zM11 10h1v1h-1zM6 11h1v1h-1zM10 11h2v1h-2zM7 12h4v1h-4zM8 13h2v1h-2z" fill="#000"/><path d="M6 3h4v1h-4zM4 4h2v1h-2zM10 4h2v1h-2zM11 5h2v1h-2zM12 6h1v1h-1z" fill="#808000"/></g></svg><svg style="left:824px;top:46px" width="16" height="16" viewBox="0 0 16 16"><g shape-rendering="crispEdges"><path d="M6 2h4v1h-4zM4 3h2v1h-2zM10 3h2v1h-2zM3 4h1v1h-1zM12 4h1v1h-1zM14 4h1v1h-1zM2 5h1v1h-1zM12 5h3v1h-3zM2 6h1v1h-1zM10 6h5v1h-5zM3 7h1v1h-1zM11 7h4v1h-4zM3 8h1v1h-1zM13 8h2v1h-2zM3 9h1v1h-1zM4 10h1v1h-1zM4 11h2v1h-2zM10 11h1v1h-1zM5 12h6v1h-6zM7 13h2v1h-2z" fill="#808080"/><path d="M6 3h4v1h-4zM4 4h2v1h-2zM10 4h2v1h-2zM3 5h1v1h-1zM3 6h1v1h-1zM15 6h1v1h-1zM4 7h1v1h-1zM15 7h1v1h-1zM4 8h1v1h-1zM15 8h1v1h-1zM4 9h1v1h-1zM14 9h2v1h-2zM5 10h1v1h-1zM6 11h1v1h-1zM11 11h1v1h-1zM11 12h1v1h-1zM6 13h1v1h-1zM9 13h3v1h-3z" fill="#fff"/></g></svg><svg style="left:847px;top:46px" width="16" height="16" viewBox="0 0 16 16"><g shape-rendering="crispEdges"><path d="M6 0h5v1h-5zM4 1h2v1h-2zM11 1h2v1h-2zM14 1h1v1h-1zM3 2h1v1h-1zM12 2h3v1h-3zM2 3h1v1h-1zM11 3h4v1h-4zM1 6h5v1h-5zM8 6h7v1h-7zM1 7h1v1h-1zM8 7h1v1h-1zM10 7h1v1h-1zM13 7h1v1h-1zM1 8h1v1h-1zM8 8h1v1h-1zM10 8h1v1h-1zM13 8h1v1h-1zM1 9h4v1h-4zM8 9h1v1h-1zM10 9h1v1h-1zM13 9h1v1h-1zM1 10h1v1h-1zM8 10h1v1h-1zM10 10h1v1h-1zM13 10h1v1h-1zM1 11h1v1h-1zM8 11h1v1h-1zM10 11h1v1h-1zM13 11h1v1h-1zM1 12h1v1h-1zM8 12h1v1h-1zM10 12h1v1h-1zM13 12h1v1h-1zM1 13h1v1h-1zM8 13h1v1h-1zM13 13h1v1h-1z" fill="#808080"/><path d="M7 1h4v1h-4zM5 2h2v1h-2zM4 3h1v1h-1zM15 3h1v1h-1zM2 4h1v1h-1zM12 4h4v1h-4zM6 6h1v1h-1zM2 7h5v1h-5zM9 7h1v1h-1zM11 7h2v1h-2zM14 7h1v1h-1zM2 8h1v1h-1zM9 8h1v1h-1zM11 8h1v1h-1zM14 8h1v1h-1zM5 9h1v1h-1zM9 9h1v1h-1zM11 9h1v1h-1zM14 9h1v1h-1zM2 10h4v1h-4zM9 10h1v1h-1zM11 10h1v1h-1zM14 10h1v1h-1zM2 11h1v1h-1zM9 11h1v1h-1zM11 11h1v1h-1zM14 11h1v1h-1zM2 12h1v1h-1zM9 12h1v1h-1zM11 12h1v1h-1zM14 12h1v1h-1zM2 13h1v1h-1zM9 13h1v1h-1zM11 13h1v1h-1zM14 13h1v1h-1zM2 14h1v1h-1zM9 14h1v1h-1zM14 14h1v1h-1z" fill="#fff"/></g></svg><svg style="left:870px;top:46px" width="16" height="16" viewBox="0 0 16 16"><g shape-rendering="crispEdges"><path d="M6 0h5v1h-5zM4 1h2v1h-2zM11 1h2v1h-2zM14 1h1v1h-1zM3 2h1v1h-1zM12 2h3v1h-3zM2 3h1v1h-1zM11 3h4v1h-4zM1 6h5v1h-5zM10 6h5v1h-5zM1 7h1v1h-1zM14 7h1v1h-1zM1 8h1v1h-1zM14 8h1v1h-1zM1 9h4v1h-4zM11 9h4v1h-4zM1 10h1v1h-1zM14 10h1v1h-1zM1 11h1v1h-1zM14 11h1v1h-1zM1 12h1v1h-1zM14 12h1v1h-1zM1 13h1v1h-1zM14 13h1v1h-1z" fill="#808080"/><path d="M7 1h4v1h-4zM5 2h2v1h-2zM4 3h1v1h-1zM15 3h1v1h-1zM2 4h1v1h-1zM12 4h4v1h-4zM6 6h1v1h-1zM2 7h5v1h-5zM10 7h4v1h-4zM15 7h1v1h-1zM2 8h1v1h-1zM15 8h1v1h-1zM5 9h1v1h-1zM15 9h1v1h-1zM2 10h4v1h-4zM12 10h2v1h-2zM15 10h1v1h-1zM2 11h1v1h-1zM15 11h1v1h-1zM2 12h1v1h-1zM15 12h1v1h-1zM2 13h1v1h-1zM15 13h1v1h-1zM2 14h1v1h-1zM15 14h1v1h-1z" fill="#fff"/></g></svg><svg style="left:893px;top:46px" width="16" height="16" viewBox="0 0 16 16"><text x="0.5" y="12.5" font-family="'Liberation Serif',serif" font-size="13" font-weight="bold" font-style="italic" fill="#000" textLength="15" lengthAdjust="spacingAndGlyphs" filter="url(#thr)">Aa</text></svg><svg style="left:916px;top:46px" width="16" height="16" viewBox="0 0 16 16"><text x="0" y="11" font-family="'DejaVu Sans Condensed','Liberation Sans',sans-serif" font-size="11" fill="#000" textLength="15" lengthAdjust="spacingAndGlyphs" filter="url(#thr)">.op</text></svg><div style="left:942px;top:40px;width:1px;height:28px;background:#808080;"></div><div style="left:943px;top:40px;width:1px;height:28px;background:#fff;"></div><div style="left:0px;top:68px;width:1279px;height:1px;background:#808080;"></div><div style="left:1px;top:69px;width:1277px;height:1px;background:#404040;"></div><div style="left:0px;top:68px;width:1px;height:1000px;background:#808080;"></div><div style="left:1px;top:69px;width:1px;height:1000px;background:#404040;"></div><div style="left:1279px;top:68px;width:1px;height:1000px;background:#fff;"></div><div style="left:1278px;top:69px;width:1px;height:1000px;background:#d4d0c8;"></div><div style="left:5px;top:72px;width:81px;height:1px;background:#fff;"></div><div style="left:4px;top:73px;width:1px;height:19px;background:#fff;"></div><div style="left:5px;top:91px;width:81px;height:1px;background:#fff;"></div><div style="left:85px;top:73px;width:1px;height:19px;background:#fff;"></div><svg style="left:10px;top:75px" width="16" height="16" viewBox="0 0 16 16"><g shape-rendering="crispEdges"><path d="M2 0h1v1h-1zM0 1h3v1h-3zM2 2h1v1h-1zM2 3h1v1h-1zM0 4h3v1h-3zM2 5h1v1h-1zM2 6h1v1h-1zM0 7h3v1h-3zM2 9h1v1h-1zM0 10h3v1h-3zM2 11h1v1h-1zM2 12h1v1h-1zM0 13h16v1h-16zM2 14h1v1h-1zM5 14h1v1h-1zM8 14h1v1h-1zM11 14h1v1h-1zM14 14h1v1h-1zM2 15h1v1h-1zM5 15h1v1h-1zM8 15h1v1h-1zM11 15h1v1h-1zM14 15h1v1h-1z" fill="#000"/><path d="M3 0h13v1h-13zM3 1h1v1h-1zM5 1h1v1h-1zM7 1h1v1h-1zM9 1h1v1h-1zM11 1h1v1h-1zM13 1h1v1h-1zM15 1h1v1h-1zM3 2h13v1h-13zM3 3h1v1h-1zM5 3h1v1h-1zM7 3h1v1h-1zM9 3h1v1h-1zM11 3h1v1h-1zM13 3h1v1h-1zM3 4h3v1h-3zM10 4h3v1h-3zM15 4h1v1h-1zM3 5h2v1h-2zM11 5h1v1h-1zM15 5h1v1h-1zM3 6h1v1h-1zM7 6h2v1h-2zM15 6h1v1h-1zM6 7h4v1h-4zM13 7h3v1h-3zM5 8h1v1h-1zM7 8h1v1h-1zM9 8h1v1h-1zM11 8h1v1h-1zM13 8h1v1h-1zM15 8h1v1h-1zM3 9h13v1h-13zM3 10h1v1h-1zM5 10h1v1h-1zM7 10h1v1h-1zM9 10h1v1h-1zM11 10h1v1h-1zM13 10h1v1h-1zM15 10h1v1h-1zM3 11h13v1h-13zM3 12h1v1h-1zM5 12h1v1h-1zM7 12h1v1h-1zM9 12h1v1h-1zM11 12h1v1h-1zM13 12h1v1h-1zM15 12h1v1h-1z" fill="#c0c0c0"/><path d="M4 1h1v1h-1zM6 1h1v1h-1zM8 1h1v1h-1zM10 1h1v1h-1zM12 1h1v1h-1zM14 1h1v1h-1zM4 3h1v1h-1zM6 3h1v1h-1zM8 3h1v1h-1zM10 3h1v1h-1zM12 3h1v1h-1zM14 6h1v1h-1zM6 8h1v1h-1zM8 8h1v1h-1zM10 8h1v1h-1zM12 8h1v1h-1zM14 8h1v1h-1zM4 10h1v1h-1zM6 10h1v1h-1zM8 10h1v1h-1zM10 10h1v1h-1zM12 10h1v1h-1zM14 10h1v1h-1zM4 12h1v1h-1zM6 12h1v1h-1zM8 12h1v1h-1zM10 12h1v1h-1zM12 12h1v1h-1zM14 12h1v1h-1z" fill="#808080"/><path d="M14 3h2v1h-2zM6 4h4v1h-4zM13 4h2v1h-2zM5 5h6v1h-6zM12 5h3v1h-3zM4 6h3v1h-3zM9 6h5v1h-5zM3 7h3v1h-3zM10 7h3v1h-3zM2 8h3v1h-3z" fill="#ff0000"/></g></svg><div class="t" style="left:32px;top:77px;font-family:'DejaVu Sans Condensed','DejaVu Sans','Liberation Sans',sans-serif;font-size:11px;color:#000;white-space:nowrap;line-height:14px;height:14px;letter-spacing:-0.3px;">Draft3.raw</div><div style="left:87px;top:70px;width:104px;height:1px;background:#fff;"></div><div style="left:86px;top:71px;width:1px;height:1px;background:#fff;"></div><div style="left:85px;top:72px;width:1px;height:20px;background:#fff;"></div><div style="left:191px;top:72px;width:1px;height:21px;background:#404040;"></div><div style="left:190px;top:73px;width:1px;height:20px;background:#808080;"></div><svg style="left:94px;top:72px" width="16" height="16" viewBox="0 0 16 16"><g shape-rendering="crispEdges"><path d="M10 0h1v1h-1zM9 1h1v1h-1zM8 2h1v1h-1zM4 3h2v1h-2zM7 3h1v1h-1zM4 4h3v1h-3zM4 5h2v1h-2zM4 6h2v1h-2zM1 7h5v1h-5zM4 8h2v1h-2zM4 9h2v1h-2zM4 10h3v1h-3zM4 11h2v1h-2zM7 11h1v1h-1zM8 12h1v1h-1zM10 12h1v1h-1zM9 13h2v1h-2zM8 14h3v1h-3z" fill="#0000ff"/></g></svg><div class="t" style="left:115px;top:75px;font-family:'DejaVu Sans Condensed','DejaVu Sans','Liberation Sans',sans-serif;font-size:11px;color:#000;white-space:nowrap;line-height:14px;height:14px;letter-spacing:-0.1px;">SyntDiode.asc</div><div style="left:2px;top:92px;width:3px;height:1px;background:#fff;"></div><div style="left:192px;top:92px;width:1086px;height:1px;background:#fff;"></div><div style="left:2px;top:93px;width:1276px;height:1px;background:#808080;"></div><div style="left:2px;top:94px;width:1276px;height:1px;background:#404040;"></div></div>
<div style="left:0;top:81px;width:1280px;height:917px;overflow:hidden"><div style="left:0;top:-81px;width:1280px;height:998px"><div style="left:0px;top:81px;width:1280px;height:18px;background:linear-gradient(to right,#0a246a 0%,#a6caf0 100%);"></div><svg style="left:2px;top:82px" width="16" height="16" viewBox="0 0 16 16"><g shape-rendering="crispEdges"><rect x="0" y="0" width="16" height="16" fill="#d4d0c8"/></g><g shape-rendering="crispEdges"><path d="M6 3h2v1h-2zM9 3h7v1h-7zM5 4h2v1h-2zM10 4h5v1h-5zM4 5h2v1h-2zM11 5h3v1h-3zM4 6h2v1h-2zM11 6h3v1h-3zM3 7h2v1h-2zM11 7h2v1h-2zM3 8h2v1h-2zM10 8h2v1h-2zM2 9h3v1h-3zM9 9h2v1h-2zM2 10h3v1h-3zM9 10h2v1h-2zM1 11h5v1h-5zM8 11h2v1h-2zM0 12h7v1h-7zM8 12h2v1h-2z" fill="#a00000"/></g></svg><div class="t" style="left:20px;top:84px;font-family:'DejaVu Sans Condensed','DejaVu Sans','Liberation Sans',sans-serif;font-size:11px;color:#fff;white-space:nowrap;line-height:14px;height:14px;font-weight:bold;letter-spacing:0.12px;">LTspice IV - SyntDiode.asc</div><div style="left:1228px;top:83px;width:16px;height:14px;background:#d4d0c8;box-shadow:inset -1px -1px 0 #404040,inset 1px 1px 0 #fff,inset -2px -2px 0 #808080;"><div style="left:4px;top:9px;width:6px;height:2px;background:#000"></div></div><div style="left:1244px;top:83px;width:16px;height:14px;background:#d4d0c8;box-shadow:inset -1px -1px 0 #404040,inset 1px 1px 0 #fff,inset -2px -2px 0 #808080;"><div style="left:5px;top:2px;width:6px;height:6px;box-sizing:border-box;border:1px solid #000;border-top-width:2px"></div><div style="left:3px;top:5px;width:6px;height:6px;box-sizing:border-box;border:1px solid #000;border-top-width:2px;background:#d4d0c8"></div></div><div style="left:1262px;top:83px;width:16px;height:14px;background:#d4d0c8;box-shadow:inset -1px -1px 0 #404040,inset 1px 1px 0 #fff,inset -2px -2px 0 #808080;"><svg style="left:4px;top:3px" width="8" height="7" viewBox="0 0 8 7" shape-rendering="crispEdges"><path d="M0 0h2v1h1v1h2v-1h1v-1h2v1h-1v1h-1v1h-1v1h1v1h1v1h1v1h-2v-1h-1v-1h-2v1h-1v1h-2v-1h1v-1h1v-1h1v-1h-1v-1h-1v-1h-1z" fill="#000"/></svg></div><div class="t" style="left:5.5px;top:103px;font-family:'DejaVu Sans Condensed','DejaVu Sans','Liberation Sans',sans-serif;font-size:11px;color:#000;white-space:nowrap;line-height:14px;height:14px;">File</div><div style="left:6px;top:114px;width:5px;height:1px;background:#000;"></div><div class="t" style="left:33.5px;top:103px;font-family:'DejaVu Sans Condensed','DejaVu Sans','Liberation Sans',sans-serif;font-size:11px;color:#000;white-space:nowrap;line-height:14px;height:14px;letter-spacing:-0.3px;">Edit</div><div style="left:34px;top:114px;width:6px;height:1px;background:#000;"></div><div class="t" style="left:63.5px;top:103px;font-family:'DejaVu Sans Condensed','DejaVu Sans','Liberation Sans',sans-serif;font-size:11px;color:#000;white-space:nowrap;line-height:14px;height:14px;letter-spacing:-0.22px;">Hierarchy</div><div style="left:71px;top:114px;width:2px;height:1px;background:#000;"></div><div class="t" style="left:121.5px;top:103px;font-family:'DejaVu Sans Condensed','DejaVu Sans','Liberation Sans',sans-serif;font-size:11px;color:#000;white-space:nowrap;line-height:14px;height:14px;letter-spacing:-0.45px;">View</div><div style="left:122px;top:114px;width:6px;height:1px;background:#000;"></div><div class="t" style="left:155px;top:103px;font-family:'DejaVu Sans Condensed','DejaVu Sans','Liberation Sans',sans-serif;font-size:11px;color:#000;white-space:nowrap;line-height:14px;height:14px;letter-spacing:-0.5px;">Simulate</div><div style="left:155px;top:114px;width:6px;height:1px;background:#000;"></div><div class="t" style="left:208px;top:103px;font-family:'DejaVu Sans Condensed','DejaVu Sans','Liberation Sans',sans-serif;font-size:11px;color:#000;white-space:nowrap;line-height:14px;height:14px;">Tools</div><div style="left:208px;top:114px;width:6px;height:1px;background:#000;"></div><div class="t" style="left:245px;top:103px;font-family:'DejaVu Sans Condensed','DejaVu Sans','Liberation Sans',sans-serif;font-size:11px;color:#000;white-space:nowrap;line-height:14px;height:14px;letter-spacing:-0.2px;">Window</div><div style="left:245px;top:114px;width:9px;height:1px;background:#000;"></div><div class="t" style="left:294.5px;top:103px;font-family:'DejaVu Sans Condensed','DejaVu Sans','Liberation Sans',sans-serif;font-size:11px;color:#000;white-space:nowrap;line-height:14px;height:14px;letter-spacing:-0.35px;">Help</div><div style="left:295px;top:114px;width:7px;height:1px;background:#000;"></div><div style="left:0px;top:119px;width:1280px;height:1px;background:#808080;"></div><div style="left:0px;top:120px;width:1280px;height:1px;background:#fff;"></div><div style="left:2px;top:123px;width:1px;height:23px;background:#fff;"></div><div style="left:3px;top:123px;width:1px;height:23px;background:#d4d0c8;"></div><div style="left:4px;top:123px;width:1px;height:23px;background:#808080;"></div><div style="left:2px;top:146px;width:3px;height:1px;background:#808080;"></div><svg style="left:16px;top:127px" width="16" height="16" viewBox="0 0 16 16"><g shape-rendering="crispEdges"><path d="M1 0h10v1h-10zM1 1h1v1h-1zM10 1h2v1h-2zM1 2h1v1h-1zM10 2h1v1h-1zM12 2h1v1h-1zM1 3h1v1h-1zM10 3h1v1h-1zM13 3h1v1h-1zM1 4h1v1h-1zM10 4h5v1h-5zM1 5h1v1h-1zM14 5h1v1h-1zM1 6h1v1h-1zM14 6h1v1h-1zM1 7h1v1h-1zM14 7h1v1h-1zM1 8h1v1h-1zM14 8h1v1h-1zM1 9h1v1h-1zM14 9h1v1h-1zM1 10h1v1h-1zM14 10h1v1h-1zM1 11h1v1h-1zM14 11h1v1h-1zM1 12h1v1h-1zM14 12h1v1h-1zM1 13h1v1h-1zM14 13h1v1h-1zM1 14h14v1h-14z" fill="#000"/><path d="M2 1h8v1h-8zM2 2h8v1h-8zM11 2h1v1h-1zM2 3h8v1h-8zM11 3h2v1h-2zM2 4h8v1h-8zM2 5h5v1h-5zM2 6h3v1h-3zM8 6h2v1h-2zM13 6h1v1h-1zM2 7h2v1h-2zM7 7h3v1h-3zM12 7h2v1h-2zM2 8h1v1h-1zM7 8h2v1h-2zM12 8h2v1h-2zM10 9h4v1h-4zM2 10h5v1h-5zM9 10h5v1h-5zM2 11h12v1h-12zM2 12h12v1h-12zM2 13h12v1h-12z" fill="#fff"/><path d="M7 5h7v1h-7zM5 6h3v1h-3zM10 6h3v1h-3zM4 7h3v1h-3zM10 7h2v1h-2zM3 8h4v1h-4zM9 8h3v1h-3zM2 9h8v1h-8zM7 10h2v1h-2z" fill="#ff0000"/></g></svg><svg style="left:39px;top:127px" width="16" height="16" viewBox="0 0 16 16"><g shape-rendering="crispEdges"><path d="M10 0h3v1h-3zM9 1h1v1h-1zM13 1h1v1h-1zM15 1h1v1h-1zM14 2h2v1h-2zM2 3h3v1h-3zM13 3h3v1h-3zM1 4h1v1h-1zM5 4h7v1h-7zM1 5h1v1h-1zM11 5h1v1h-1zM1 6h1v1h-1zM11 6h1v1h-1zM1 7h1v1h-1zM5 7h11v1h-11zM1 8h1v1h-1zM4 8h1v1h-1zM14 8h1v1h-1zM1 9h1v1h-1zM3 9h1v1h-1zM13 9h1v1h-1zM1 10h2v1h-2zM12 10h1v1h-1zM1 11h1v1h-1zM11 11h1v1h-1zM1 12h11v1h-11z" fill="#000"/><path d="M2 4h1v1h-1zM4 4h1v1h-1zM3 5h1v1h-1zM5 5h1v1h-1zM7 5h1v1h-1zM9 5h1v1h-1zM2 6h1v1h-1zM4 6h1v1h-1zM6 6h1v1h-1zM8 6h1v1h-1zM10 6h1v1h-1zM3 7h1v1h-1zM2 8h1v1h-1z" fill="#ffffc0"/><path d="M3 4h1v1h-1zM2 5h1v1h-1zM4 5h1v1h-1zM6 5h1v1h-1zM8 5h1v1h-1zM10 5h1v1h-1zM3 6h1v1h-1zM5 6h1v1h-1zM7 6h1v1h-1zM9 6h1v1h-1zM2 7h1v1h-1zM4 7h1v1h-1zM3 8h1v1h-1zM2 9h1v1h-1z" fill="#ffff00"/><path d="M5 8h9v1h-9zM4 9h9v1h-9zM3 10h9v1h-9zM2 11h9v1h-9z" fill="#808000"/></g></svg><div style="left:62px;top:126px;width:1px;height:18px;background:#808080;"></div><div style="left:63px;top:126px;width:1px;height:18px;background:#fff;"></div><svg style="left:70px;top:127px" width="16" height="16" viewBox="0 0 16 16"><g shape-rendering="crispEdges"><path d="M1 0h14v1h-14zM1 1h1v1h-1zM3 1h1v1h-1zM12 1h1v1h-1zM14 1h1v1h-1zM1 2h1v1h-1zM3 2h1v1h-1zM12 2h1v1h-1zM14 2h1v1h-1zM1 3h1v1h-1zM3 3h1v1h-1zM12 3h1v1h-1zM14 3h1v1h-1zM1 4h1v1h-1zM3 4h1v1h-1zM12 4h1v1h-1zM14 4h1v1h-1zM1 5h1v1h-1zM3 5h1v1h-1zM12 5h1v1h-1zM14 5h1v1h-1zM1 6h1v1h-1zM3 6h1v1h-1zM12 6h1v1h-1zM14 6h1v1h-1zM1 7h1v1h-1zM4 7h8v1h-8zM14 7h1v1h-1zM1 8h1v1h-1zM14 8h1v1h-1zM1 9h1v1h-1zM4 9h8v1h-8zM14 9h1v1h-1zM1 10h1v1h-1zM4 10h5v1h-5zM11 10h1v1h-1zM14 10h1v1h-1zM1 11h1v1h-1zM4 11h5v1h-5zM11 11h1v1h-1zM14 11h1v1h-1zM1 12h1v1h-1zM4 12h5v1h-5zM11 12h1v1h-1zM14 12h1v1h-1zM2 13h13v1h-13z" fill="#000"/><path d="M2 1h1v1h-1zM2 2h1v1h-1zM13 2h1v1h-1zM2 3h1v1h-1zM13 3h1v1h-1zM2 4h1v1h-1zM13 4h1v1h-1zM2 5h1v1h-1zM13 5h1v1h-1zM2 6h1v1h-1zM13 6h1v1h-1zM2 7h2v1h-2zM12 7h2v1h-2zM2 8h12v1h-12zM2 9h2v1h-2zM12 9h2v1h-2zM2 10h2v1h-2zM12 10h2v1h-2zM2 11h2v1h-2zM12 11h2v1h-2zM2 12h2v1h-2zM12 12h2v1h-2z" fill="#808000"/><path d="M4 1h8v1h-8zM4 2h1v1h-1zM11 2h1v1h-1zM4 3h1v1h-1zM11 3h1v1h-1zM4 4h1v1h-1zM11 4h1v1h-1zM4 5h1v1h-1zM11 5h1v1h-1zM4 6h8v1h-8z" fill="#c0c0c0"/><path d="M13 1h1v1h-1zM5 2h6v1h-6zM5 3h6v1h-6zM5 4h6v1h-6zM5 5h6v1h-6zM9 10h2v1h-2zM9 11h2v1h-2zM9 12h2v1h-2z" fill="#fff"/></g></svg><div style="left:93px;top:126px;width:1px;height:18px;background:#808080;"></div><div style="left:94px;top:126px;width:1px;height:18px;background:#fff;"></div><svg style="left:101px;top:127px" width="16" height="16" viewBox="0 0 16 16"><g shape-rendering="crispEdges"><path d="M6 0h6v1h-6zM1 1h2v1h-2zM5 1h1v1h-1zM12 1h2v1h-2zM0 2h1v1h-1zM3 2h2v1h-2zM14 2h1v1h-1zM0 3h1v1h-1zM15 3h1v1h-1zM0 4h1v1h-1zM3 4h3v1h-3zM11 4h2v1h-2zM15 4h1v1h-1zM1 5h2v1h-2zM6 5h5v1h-5zM13 5h1v1h-1zM15 5h1v1h-1zM14 6h2v1h-2zM15 7h1v1h-1z" fill="#000"/><path d="M6 1h6v1h-6zM1 2h2v1h-2zM5 2h2v1h-2zM10 2h4v1h-4zM1 3h5v1h-5zM11 3h4v1h-4zM1 4h2v1h-2zM13 4h2v1h-2zM14 5h1v1h-1z" fill="#fff"/><path d="M7 2h3v1h-3zM6 3h5v1h-5zM6 4h5v1h-5z" fill="#c0c0c0"/><path d="M7 6h3v1h-3zM7 7h3v1h-3zM7 8h3v1h-3zM7 9h3v1h-3zM7 10h3v1h-3zM6 11h5v1h-5zM6 12h5v1h-5zM6 13h5v1h-5zM6 14h5v1h-5z" fill="#0000ff"/></g></svg><div style="left:124px;top:126px;width:1px;height:18px;background:#808080;"></div><div style="left:125px;top:126px;width:1px;height:18px;background:#fff;"></div><svg style="left:132px;top:127px" width="16" height="16" viewBox="0 0 16 16"><g shape-rendering="crispEdges"><path d="M3 0h1v1h-1zM4 1h1v1h-1zM1 2h1v1h-1zM2 3h1v1h-1z" fill="#808080"/><path d="M10 0h4v1h-4zM10 1h1v1h-1zM12 1h2v1h-2zM10 2h3v1h-3zM5 3h3v1h-3zM9 3h2v1h-2zM5 4h1v1h-1zM7 4h4v1h-4zM7 5h3v1h-3zM12 5h1v1h-1zM6 6h3v1h-3zM10 6h3v1h-3zM5 7h3v1h-3zM4 8h2v1h-2zM7 8h2v1h-2zM0 9h5v1h-5zM8 9h2v1h-2zM0 10h1v1h-1zM8 10h2v1h-2zM0 11h1v1h-1zM9 11h1v1h-1zM8 12h2v1h-2zM8 13h2v1h-2z" fill="#000"/><path d="M11 1h1v1h-1z" fill="#fff"/></g></svg><svg style="left:155px;top:127px" width="16" height="16" viewBox="0 0 16 16"><g shape-rendering="crispEdges"><path d="M7 0h1v1h-1zM5 1h1v1h-1zM7 1h1v1h-1zM9 1h1v1h-1zM5 2h1v1h-1zM7 2h1v1h-1zM9 2h1v1h-1zM11 2h1v1h-1zM3 3h1v1h-1zM5 3h1v1h-1zM7 3h1v1h-1zM9 3h1v1h-1zM11 3h1v1h-1zM3 4h1v1h-1zM5 4h1v1h-1zM7 4h1v1h-1zM9 4h1v1h-1zM11 4h1v1h-1zM13 4h1v1h-1zM3 5h1v1h-1zM5 5h1v1h-1zM7 5h1v1h-1zM9 5h1v1h-1zM11 5h1v1h-1zM13 5h1v1h-1zM3 6h1v1h-1zM5 6h1v1h-1zM7 6h1v1h-1zM9 6h1v1h-1zM11 6h1v1h-1zM13 6h1v1h-1zM1 7h1v1h-1zM3 7h1v1h-1zM5 7h1v1h-1zM7 7h1v1h-1zM9 7h1v1h-1zM11 7h1v1h-1zM13 7h1v1h-1zM0 8h1v1h-1zM2 8h1v1h-1zM12 8h1v1h-1zM1 9h1v1h-1zM3 9h1v1h-1zM12 9h1v1h-1zM2 10h1v1h-1zM4 10h1v1h-1zM12 10h1v1h-1zM3 11h1v1h-1zM11 11h1v1h-1zM3 12h1v1h-1zM11 12h1v1h-1zM4 13h1v1h-1zM10 13h1v1h-1zM5 14h1v1h-1z" fill="#808080"/><path d="M8 1h1v1h-1zM6 2h1v1h-1zM8 2h1v1h-1zM6 3h1v1h-1zM8 3h1v1h-1zM10 3h1v1h-1zM4 4h1v1h-1zM6 4h1v1h-1zM8 4h1v1h-1zM10 4h1v1h-1zM4 5h1v1h-1zM6 5h1v1h-1zM8 5h1v1h-1zM10 5h1v1h-1zM12 5h1v1h-1zM4 6h1v1h-1zM6 6h1v1h-1zM8 6h1v1h-1zM10 6h1v1h-1zM12 6h1v1h-1zM4 7h1v1h-1zM6 7h1v1h-1zM8 7h1v1h-1zM10 7h1v1h-1zM12 7h1v1h-1zM1 8h1v1h-1zM4 8h1v1h-1zM6 8h1v1h-1zM8 8h1v1h-1zM10 8h1v1h-1zM13 8h1v1h-1zM2 9h1v1h-1zM13 9h1v1h-1zM3 10h1v1h-1zM13 10h1v1h-1zM4 11h1v1h-1zM12 11h1v1h-1zM4 12h1v1h-1zM12 12h1v1h-1zM5 13h1v1h-1zM11 13h1v1h-1zM6 14h5v1h-5z" fill="#fff"/></g></svg><div style="left:178px;top:126px;width:1px;height:18px;background:#808080;"></div><div style="left:179px;top:126px;width:1px;height:18px;background:#fff;"></div><svg style="left:186px;top:127px" width="16" height="16" viewBox="0 0 16 16"><g transform="translate(1,0)"><g shape-rendering="crispEdges"><path d="M3 0h5v1h-5zM1 1h2v1h-2zM8 1h2v1h-2zM1 2h1v1h-1zM6 2h1v1h-1zM10 2h1v1h-1zM0 3h1v1h-1zM6 3h1v1h-1zM11 3h1v1h-1zM0 4h1v1h-1zM6 4h1v1h-1zM11 4h1v1h-1zM0 5h1v1h-1zM3 5h7v1h-7zM11 5h1v1h-1zM0 6h1v1h-1zM6 6h1v1h-1zM11 6h1v1h-1zM0 7h1v1h-1zM6 7h1v1h-1zM11 7h1v1h-1zM1 8h1v1h-1zM6 8h1v1h-1zM10 8h1v1h-1zM1 9h2v1h-2zM8 9h3v1h-3zM3 10h5v1h-5zM9 10h3v1h-3zM10 11h3v1h-3zM11 12h3v1h-3zM12 13h3v1h-3zM13 14h2v1h-2z" fill="#000"/><path d="M3 2h2v1h-2zM2 3h2v1h-2zM2 4h1v1h-1zM9 6h1v1h-1zM8 7h2v1h-2zM8 8h1v1h-1z" fill="#00ffff"/></g></g></svg><svg style="left:209px;top:127px" width="16" height="16" viewBox="0 0 16 16"><g transform="translate(1,0)"><g shape-rendering="crispEdges"><path d="M3 0h5v1h-5zM1 1h2v1h-2zM8 1h2v1h-2zM1 2h1v1h-1zM4 2h1v1h-1zM10 2h1v1h-1zM0 3h1v1h-1zM3 3h1v1h-1zM11 3h1v1h-1zM0 4h1v1h-1zM11 4h1v1h-1zM0 5h1v1h-1zM8 5h1v1h-1zM11 5h1v1h-1zM0 6h1v1h-1zM7 6h1v1h-1zM11 6h1v1h-1zM0 7h1v1h-1zM6 7h1v1h-1zM11 7h1v1h-1zM1 8h1v1h-1zM10 8h1v1h-1zM1 9h2v1h-2zM8 9h2v1h-2zM3 10h5v1h-5zM9 10h1v1h-1zM11 10h1v1h-1zM10 11h1v1h-1zM12 11h1v1h-1zM11 12h1v1h-1zM13 12h1v1h-1zM12 13h1v1h-1zM14 13h1v1h-1z" fill="#808080"/><path d="M4 1h3v1h-3zM3 2h1v1h-1zM8 2h1v1h-1zM2 3h1v1h-1zM9 3h1v1h-1zM2 4h1v1h-1zM10 4h1v1h-1zM2 5h1v1h-1zM10 5h1v1h-1zM2 6h1v1h-1zM10 6h1v1h-1zM3 7h1v1h-1zM9 7h1v1h-1zM4 8h5v1h-5zM11 8h1v1h-1zM10 9h2v1h-2zM2 10h1v1h-1zM10 10h1v1h-1zM12 10h1v1h-1zM3 11h5v1h-5zM11 11h1v1h-1zM13 11h1v1h-1zM12 12h1v1h-1zM14 12h1v1h-1zM13 13h1v1h-1zM13 14h2v1h-2z" fill="#fff"/></g></g></svg><svg style="left:232px;top:127px" width="16" height="16" viewBox="0 0 16 16"><g transform="translate(1,0)"><g shape-rendering="crispEdges"><path d="M3 0h5v1h-5zM1 1h2v1h-2zM8 1h2v1h-2zM1 2h1v1h-1zM10 2h1v1h-1zM0 3h1v1h-1zM11 3h1v1h-1zM0 4h1v1h-1zM11 4h1v1h-1zM0 5h1v1h-1zM3 5h7v1h-7zM11 5h1v1h-1zM0 6h1v1h-1zM11 6h1v1h-1zM0 7h1v1h-1zM11 7h1v1h-1zM1 8h1v1h-1zM10 8h1v1h-1zM1 9h2v1h-2zM8 9h3v1h-3zM3 10h5v1h-5zM9 10h3v1h-3zM10 11h3v1h-3zM11 12h3v1h-3zM12 13h3v1h-3zM13 14h2v1h-2z" fill="#000"/><path d="M3 2h2v1h-2zM2 3h2v1h-2zM2 4h1v1h-1zM9 6h1v1h-1zM8 7h2v1h-2zM8 8h1v1h-1z" fill="#00ffff"/></g></g></svg><svg style="left:255px;top:127px" width="16" height="16" viewBox="0 0 16 16"><g shape-rendering="crispEdges"><path d="M0 0h2v1h-2zM0 1h3v1h-3zM12 1h1v1h-1zM1 2h3v1h-3zM10 2h2v1h-2zM3 3h2v1h-2zM8 3h2v1h-2zM4 4h2v1h-2zM7 4h2v1h-2zM5 5h3v1h-3zM5 6h3v1h-3zM4 7h2v1h-2zM7 7h2v1h-2zM2 8h3v1h-3zM8 8h2v1h-2zM0 9h3v1h-3zM9 9h2v1h-2zM0 10h2v1h-2zM10 10h1v1h-1zM10 11h2v1h-2zM11 12h1v1h-1z" fill="#ff0000"/><path d="M4 0h5v1h-5zM3 1h1v1h-1zM9 1h2v1h-2zM9 2h1v1h-1zM1 3h1v1h-1zM10 3h1v1h-1zM0 4h1v1h-1zM11 4h1v1h-1zM0 5h1v1h-1zM11 5h1v1h-1zM0 6h1v1h-1zM11 6h1v1h-1zM1 7h1v1h-1zM11 7h1v1h-1zM1 8h1v1h-1zM10 8h1v1h-1zM3 9h2v1h-2zM8 9h1v1h-1zM11 9h1v1h-1zM4 10h5v1h-5zM11 10h2v1h-2zM12 11h2v1h-2zM12 12h3v1h-3zM12 13h3v1h-3zM13 14h1v1h-1z" fill="#000"/><path d="M4 2h2v1h-2zM5 3h1v1h-1zM9 5h1v1h-1zM8 6h2v1h-2zM9 7h1v1h-1z" fill="#00ffff"/></g></svg><div style="left:278px;top:126px;width:1px;height:18px;background:#808080;"></div><div style="left:279px;top:126px;width:1px;height:18px;background:#fff;"></div><svg style="left:286px;top:127px" width="16" height="16" viewBox="0 0 16 16"><g shape-rendering="crispEdges"><path d="M1 0h1v1h-1zM0 1h2v1h-2zM1 2h1v1h-1zM0 3h2v1h-2zM1 4h1v1h-1zM0 5h2v1h-2zM1 6h1v1h-1zM0 7h2v1h-2zM1 8h1v1h-1zM0 9h2v1h-2zM1 10h1v1h-1zM0 11h2v1h-2zM1 12h1v1h-1zM0 13h16v1h-16zM1 14h1v1h-1zM3 14h1v1h-1zM5 14h1v1h-1zM7 14h1v1h-1zM9 14h1v1h-1zM11 14h1v1h-1zM13 14h1v1h-1zM15 14h1v1h-1z" fill="#000"/><path d="M6 0h1v1h-1zM12 0h1v1h-1zM5 1h1v1h-1zM7 1h1v1h-1zM11 1h1v1h-1zM13 1h1v1h-1zM4 2h1v1h-1zM8 2h1v1h-1zM10 2h1v1h-1zM14 2h1v1h-1zM2 3h2v1h-2zM9 3h1v1h-1zM15 3h1v1h-1zM2 9h4v1h-4zM8 9h5v1h-5zM5 10h4v1h-4zM12 10h4v1h-4z" fill="#000080"/><path d="M4 5h3v1h-3zM2 6h3v1h-3zM7 6h4v1h-4zM13 6h3v1h-3zM10 7h4v1h-4z" fill="#ff0000"/></g></svg><svg style="left:309px;top:127px" width="16" height="16" viewBox="0 0 16 16"><g shape-rendering="crispEdges"><path d="M1 0h1v1h-1zM9 0h2v1h-2zM12 0h1v1h-1zM1 1h1v1h-1zM7 1h2v1h-2zM11 1h3v1h-3zM1 2h1v1h-1zM5 2h2v1h-2zM12 2h1v1h-1zM1 3h1v1h-1zM4 3h1v1h-1zM12 3h1v1h-1zM1 4h1v1h-1zM3 4h1v1h-1zM12 4h1v1h-1zM1 5h1v1h-1zM4 5h1v1h-1zM12 5h1v1h-1zM1 6h1v1h-1zM3 6h1v1h-1zM12 6h1v1h-1zM1 7h1v1h-1zM4 7h1v1h-1zM12 7h1v1h-1zM1 8h1v1h-1zM5 8h2v1h-2zM12 8h1v1h-1zM1 9h1v1h-1zM7 9h2v1h-2zM11 9h3v1h-3zM1 10h1v1h-1zM9 10h2v1h-2zM12 10h1v1h-1zM1 11h1v1h-1zM1 12h1v1h-1zM1 13h15v1h-15z" fill="#808080"/><path d="M2 1h1v1h-1zM2 2h1v1h-1zM11 2h1v1h-1zM13 2h2v1h-2zM2 3h1v1h-1zM6 3h1v1h-1zM13 3h1v1h-1zM2 4h1v1h-1zM5 4h1v1h-1zM13 4h1v1h-1zM2 5h1v1h-1zM6 5h1v1h-1zM13 5h1v1h-1zM2 6h1v1h-1zM5 6h1v1h-1zM13 6h1v1h-1zM2 7h1v1h-1zM6 7h1v1h-1zM13 7h1v1h-1zM2 8h1v1h-1zM13 8h1v1h-1zM2 9h1v1h-1zM2 10h1v1h-1zM13 10h2v1h-2zM2 11h1v1h-1zM12 11h1v1h-1zM2 12h1v1h-1zM2 14h14v1h-14z" fill="#fff"/></g></svg><div style="left:332px;top:126px;width:1px;height:18px;background:#808080;"></div><div style="left:333px;top:126px;width:1px;height:18px;background:#fff;"></div><svg style="left:340px;top:127px" width="16" height="16" viewBox="0 0 16 16"><g shape-rendering="crispEdges"><path d="M0 0h16v1h-16zM0 1h1v1h-1zM2 1h10v1h-10zM13 1h1v1h-1zM15 1h1v1h-1zM0 2h16v1h-16zM0 3h1v1h-1zM15 3h1v1h-1zM0 4h1v1h-1zM15 4h1v1h-1zM0 5h1v1h-1zM15 5h1v1h-1zM0 6h1v1h-1zM15 6h1v1h-1zM0 7h16v1h-16zM0 8h1v1h-1zM2 8h10v1h-10zM13 8h1v1h-1zM15 8h1v1h-1zM0 9h16v1h-16zM0 10h1v1h-1zM15 10h1v1h-1zM0 11h1v1h-1zM15 11h1v1h-1zM0 12h1v1h-1zM15 12h1v1h-1zM0 13h1v1h-1zM15 13h1v1h-1zM0 14h16v1h-16z" fill="#000080"/><path d="M1 1h1v1h-1zM12 1h1v1h-1zM14 1h1v1h-1zM1 8h1v1h-1zM12 8h1v1h-1zM14 8h1v1h-1z" fill="#fff"/></g></svg><svg style="left:363px;top:127px" width="16" height="16" viewBox="0 0 16 16"><g shape-rendering="crispEdges"><path d="M0 0h10v1h-10zM0 1h1v1h-1zM2 1h8v1h-8zM0 2h10v1h-10zM0 3h1v1h-1zM9 3h1v1h-1zM0 4h1v1h-1zM3 4h10v1h-10zM0 5h1v1h-1zM3 5h1v1h-1zM5 5h8v1h-8zM0 6h1v1h-1zM3 6h10v1h-10zM0 7h4v1h-4zM12 7h1v1h-1zM3 8h1v1h-1zM6 8h10v1h-10zM3 9h1v1h-1zM6 9h1v1h-1zM8 9h8v1h-8zM3 10h1v1h-1zM6 10h10v1h-10zM3 11h4v1h-4zM15 11h1v1h-1zM6 12h1v1h-1zM15 12h1v1h-1zM6 13h1v1h-1zM15 13h1v1h-1zM6 14h10v1h-10z" fill="#000080"/><path d="M1 1h1v1h-1zM2 3h7v1h-7zM2 4h1v1h-1zM2 5h1v1h-1zM4 5h1v1h-1zM5 7h7v1h-7zM5 8h1v1h-1zM5 9h1v1h-1zM7 9h1v1h-1zM7 11h8v1h-8zM7 12h1v1h-1zM14 12h1v1h-1zM7 13h8v1h-8z" fill="#fff"/></g></svg><svg style="left:386px;top:127px" width="16" height="16" viewBox="0 0 16 16"><g shape-rendering="crispEdges"><path d="M0 0h8v1h-8zM0 1h1v1h-1zM2 1h6v1h-6zM0 2h8v1h-8zM0 3h1v1h-1zM7 3h1v1h-1zM0 4h1v1h-1zM3 4h8v1h-8zM0 5h1v1h-1zM3 5h1v1h-1zM5 5h6v1h-6zM0 6h1v1h-1zM3 6h8v1h-8zM0 7h4v1h-4zM10 7h1v1h-1zM3 8h1v1h-1zM6 8h8v1h-8zM3 9h1v1h-1zM6 9h1v1h-1zM8 9h6v1h-6zM3 10h1v1h-1zM6 10h8v1h-8zM3 11h4v1h-4zM13 11h1v1h-1zM6 12h1v1h-1zM13 12h1v1h-1zM6 13h1v1h-1zM13 13h1v1h-1zM6 14h8v1h-8z" fill="#000080"/><path d="M12 0h4v1h-4zM12 1h3v1h-3zM12 2h4v1h-4zM12 3h1v1h-1zM14 3h2v1h-2zM2 4h1v1h-1zM15 4h1v1h-1zM2 5h1v1h-1zM5 8h1v1h-1zM5 9h1v1h-1zM8 12h4v1h-4z" fill="#000"/><path d="M1 1h1v1h-1zM2 3h5v1h-5zM4 5h1v1h-1zM5 7h5v1h-5zM7 9h1v1h-1zM7 11h6v1h-6zM7 12h1v1h-1zM12 12h1v1h-1zM7 13h6v1h-6z" fill="#fff"/></g></svg><div style="left:409px;top:126px;width:1px;height:18px;background:#808080;"></div><div style="left:410px;top:126px;width:1px;height:18px;background:#fff;"></div><svg style="left:417px;top:127px" width="16" height="16" viewBox="0 0 16 16"><g shape-rendering="crispEdges"><path d="M6 0h1v1h-1zM10 0h1v1h-1zM6 1h1v1h-1zM10 1h1v1h-1zM6 2h2v1h-2zM9 2h2v1h-2zM7 3h1v1h-1zM9 3h1v1h-1zM7 4h3v1h-3zM8 5h1v1h-1zM8 6h1v1h-1z" fill="#000"/><path d="M7 6h1v1h-1zM9 6h1v1h-1zM6 7h2v1h-2zM9 7h2v1h-2zM5 8h2v1h-2zM8 8h1v1h-1zM10 8h3v1h-3zM4 9h1v1h-1zM6 9h1v1h-1zM8 9h1v1h-1zM10 9h1v1h-1zM13 9h1v1h-1zM4 10h1v1h-1zM7 10h2v1h-2zM10 10h1v1h-1zM13 10h1v1h-1zM4 11h1v1h-1zM7 11h1v1h-1zM10 11h1v1h-1zM13 11h1v1h-1zM4 12h1v1h-1zM7 12h1v1h-1zM11 12h2v1h-2zM5 13h2v1h-2z" fill="#000080"/></g></svg><svg style="left:440px;top:127px" width="16" height="16" viewBox="0 0 16 16"><g shape-rendering="crispEdges"><path d="M1 0h6v1h-6zM1 1h1v1h-1zM6 1h2v1h-2zM1 2h1v1h-1zM3 2h2v1h-2zM6 2h1v1h-1zM8 2h1v1h-1zM1 3h1v1h-1zM1 4h1v1h-1zM3 4h3v1h-3zM1 5h1v1h-1zM1 6h1v1h-1zM3 6h3v1h-3zM1 7h1v1h-1zM1 8h1v1h-1zM1 9h6v1h-6z" fill="#000"/><path d="M2 1h4v1h-4zM2 2h1v1h-1zM5 2h1v1h-1zM7 2h1v1h-1zM2 3h5v1h-5zM2 4h1v1h-1zM6 4h1v1h-1zM8 4h4v1h-4zM2 5h5v1h-5zM8 5h1v1h-1zM11 5h1v1h-1zM13 5h1v1h-1zM2 6h1v1h-1zM6 6h1v1h-1zM8 6h6v1h-6zM2 7h5v1h-5zM8 7h1v1h-1zM13 7h1v1h-1zM2 8h5v1h-5zM8 8h6v1h-6zM8 9h1v1h-1zM13 9h1v1h-1zM8 10h6v1h-6zM8 11h6v1h-6z" fill="#fff"/><path d="M7 3h6v1h-6zM7 4h1v1h-1zM12 4h2v1h-2zM7 5h1v1h-1zM9 5h2v1h-2zM12 5h1v1h-1zM14 5h1v1h-1zM7 6h1v1h-1zM14 6h1v1h-1zM7 7h1v1h-1zM9 7h4v1h-4zM14 7h1v1h-1zM7 8h1v1h-1zM14 8h1v1h-1zM7 9h1v1h-1zM9 9h4v1h-4zM14 9h1v1h-1zM7 10h1v1h-1zM14 10h1v1h-1zM7 11h1v1h-1zM14 11h1v1h-1zM7 12h8v1h-8z" fill="#000080"/></g></svg><svg style="left:463px;top:127px" width="16" height="16" viewBox="0 0 16 16"><g shape-rendering="crispEdges"><path d="M6 0h4v1h-4zM2 1h5v1h-5zM9 1h5v1h-5zM1 2h3v1h-3zM12 2h3v1h-3zM1 3h2v1h-2zM4 3h8v1h-8zM13 3h2v1h-2zM1 4h14v1h-14zM1 5h14v1h-14zM1 6h7v1h-7zM1 7h7v1h-7zM1 8h7v1h-7zM10 8h4v1h-4zM1 9h7v1h-7zM1 10h7v1h-7zM10 10h4v1h-4zM1 11h7v1h-7zM7 12h1v1h-1z" fill="#808080"/><path d="M7 1h2v1h-2zM4 2h1v1h-1zM11 2h1v1h-1zM3 3h1v1h-1zM12 3h1v1h-1zM8 6h7v1h-7zM8 7h1v1h-1zM14 7h1v1h-1zM8 8h1v1h-1zM8 9h1v1h-1zM14 9h1v1h-1zM8 10h1v1h-1zM8 11h1v1h-1zM14 11h1v1h-1zM8 12h7v1h-7z" fill="#c0c0c0"/><path d="M5 2h6v1h-6zM15 6h1v1h-1zM9 7h5v1h-5zM15 7h1v1h-1zM9 8h1v1h-1zM14 8h2v1h-2zM9 9h5v1h-5zM15 9h1v1h-1zM9 10h1v1h-1zM14 10h2v1h-2zM9 11h5v1h-5zM15 11h1v1h-1zM1 12h6v1h-6zM15 12h1v1h-1zM8 13h8v1h-8z" fill="#fff"/></g></svg><svg style="left:486px;top:127px" width="16" height="16" viewBox="0 0 16 16"><g shape-rendering="crispEdges"><path d="M4 1h3v1h-3zM10 1h3v1h-3zM4 2h1v1h-1zM6 2h1v1h-1zM10 2h1v1h-1zM12 2h1v1h-1zM3 3h5v1h-5zM9 3h5v1h-5zM3 4h1v1h-1zM5 4h3v1h-3zM9 4h1v1h-1zM11 4h3v1h-3zM2 5h13v1h-13zM1 6h2v1h-2zM4 6h3v1h-3zM8 6h2v1h-2zM11 6h5v1h-5zM1 7h2v1h-2zM4 7h3v1h-3zM8 7h2v1h-2zM11 7h5v1h-5zM1 8h2v1h-2zM4 8h6v1h-6zM11 8h5v1h-5zM1 9h7v1h-7zM9 9h7v1h-7zM1 10h1v1h-1zM3 10h4v1h-4zM10 10h1v1h-1zM12 10h4v1h-4zM1 11h1v1h-1zM3 11h3v1h-3zM12 11h4v1h-4zM1 12h4v1h-4zM11 12h5v1h-5zM1 13h4v1h-4zM11 13h5v1h-5z" fill="#000"/><path d="M5 2h1v1h-1zM11 2h1v1h-1zM4 4h1v1h-1zM10 4h1v1h-1zM3 6h1v1h-1zM7 6h1v1h-1zM10 6h1v1h-1zM3 7h1v1h-1zM7 7h1v1h-1zM10 7h1v1h-1zM3 8h1v1h-1zM10 8h1v1h-1zM2 10h1v1h-1zM11 10h1v1h-1zM2 11h1v1h-1zM11 11h1v1h-1z" fill="#fff"/></g></svg><div style="left:509px;top:126px;width:1px;height:18px;background:#808080;"></div><div style="left:510px;top:126px;width:1px;height:18px;background:#fff;"></div><svg style="left:517px;top:127px" width="16" height="16" viewBox="0 0 16 16"><g shape-rendering="crispEdges"><path d="M5 1h8v1h-8zM4 2h1v1h-1zM7 2h1v1h-1zM9 2h1v1h-1zM13 2h1v1h-1zM4 3h1v1h-1zM8 3h1v1h-1zM14 3h1v1h-1zM2 4h13v1h-13zM1 5h1v1h-1zM15 5h1v1h-1zM1 6h1v1h-1zM3 6h1v1h-1zM6 6h1v1h-1zM8 6h1v1h-1zM10 6h1v1h-1zM12 6h1v1h-1zM15 6h1v1h-1zM1 7h1v1h-1zM5 7h1v1h-1zM7 7h1v1h-1zM9 7h1v1h-1zM11 7h1v1h-1zM13 7h1v1h-1zM15 7h1v1h-1zM1 8h1v1h-1zM4 8h1v1h-1zM6 8h1v1h-1zM8 8h1v1h-1zM10 8h1v1h-1zM12 8h1v1h-1zM15 8h1v1h-1zM1 9h1v1h-1zM3 9h1v1h-1zM5 9h1v1h-1zM7 9h1v1h-1zM9 9h1v1h-1zM11 9h1v1h-1zM13 9h1v1h-1zM15 9h1v1h-1zM1 10h1v1h-1zM4 10h1v1h-1zM6 10h1v1h-1zM8 10h1v1h-1zM10 10h1v1h-1zM12 10h1v1h-1zM15 10h1v1h-1zM1 11h1v1h-1zM15 11h1v1h-1zM1 12h15v1h-15zM4 13h10v1h-10z" fill="#000"/><path d="M5 2h2v1h-2zM8 2h1v1h-1zM10 2h3v1h-3zM5 3h3v1h-3zM9 3h5v1h-5zM2 5h13v1h-13zM2 6h1v1h-1zM4 6h1v1h-1zM14 6h1v1h-1zM2 7h2v1h-2zM14 7h1v1h-1zM2 8h1v1h-1zM14 8h1v1h-1zM2 9h1v1h-1zM14 9h1v1h-1zM2 10h1v1h-1zM13 10h2v1h-2zM2 11h13v1h-13z" fill="#fff"/><path d="M5 6h1v1h-1zM7 6h1v1h-1zM9 6h1v1h-1zM11 6h1v1h-1zM13 6h1v1h-1zM4 7h1v1h-1zM6 7h1v1h-1zM8 7h1v1h-1zM10 7h1v1h-1zM12 7h1v1h-1zM3 8h1v1h-1zM5 8h1v1h-1zM7 8h1v1h-1zM9 8h1v1h-1zM11 8h1v1h-1zM13 8h1v1h-1zM4 9h1v1h-1zM6 9h1v1h-1zM8 9h1v1h-1zM10 9h1v1h-1zM12 9h1v1h-1zM3 10h1v1h-1zM5 10h1v1h-1zM7 10h1v1h-1zM9 10h1v1h-1zM11 10h1v1h-1z" fill="#c0c0c0"/></g></svg><svg style="left:540px;top:127px" width="16" height="16" viewBox="0 0 16 16"><g shape-rendering="crispEdges"><path d="M5 0h9v1h-9zM4 1h1v1h-1zM13 1h1v1h-1zM4 2h1v1h-1zM6 2h5v1h-5zM12 2h1v1h-1zM3 3h1v1h-1zM12 3h1v1h-1zM3 4h1v1h-1zM5 4h5v1h-5zM11 4h4v1h-4zM2 5h1v1h-1zM11 5h1v1h-1zM13 5h1v1h-1zM15 5h1v1h-1zM1 6h12v1h-12zM14 6h2v1h-2zM0 7h1v1h-1zM12 7h2v1h-2zM15 7h1v1h-1zM0 8h13v1h-13zM14 8h2v1h-2zM0 9h1v1h-1zM12 9h3v1h-3zM0 10h15v1h-15zM1 11h1v1h-1zM12 11h2v1h-2zM1 12h12v1h-12z" fill="#000"/><path d="M5 1h8v1h-8zM5 2h1v1h-1zM11 2h1v1h-1zM4 3h8v1h-8zM4 4h1v1h-1zM10 4h1v1h-1zM3 5h8v1h-8zM1 9h6v1h-6zM10 9h2v1h-2zM2 11h10v1h-10z" fill="#fff"/><path d="M12 5h1v1h-1zM14 5h1v1h-1zM13 6h1v1h-1zM1 7h11v1h-11zM14 7h1v1h-1zM13 8h1v1h-1z" fill="#c0c0c0"/><path d="M7 9h3v1h-3z" fill="#ffff00"/></g></svg><div style="left:563px;top:126px;width:1px;height:18px;background:#808080;"></div><div style="left:564px;top:126px;width:1px;height:18px;background:#fff;"></div><svg style="left:571px;top:127px" width="16" height="16" viewBox="0 0 16 16"><g shape-rendering="crispEdges"><path d="M6 0h3v1h-3zM5 1h4v1h-4zM5 2h1v1h-1zM7 2h2v1h-2zM4 3h1v1h-1zM8 3h1v1h-1zM4 4h1v1h-1zM8 4h1v1h-1zM3 5h1v1h-1zM7 5h1v1h-1zM3 6h1v1h-1zM7 6h1v1h-1zM2 7h1v1h-1zM6 7h1v1h-1zM2 8h1v1h-1zM5 8h2v1h-2zM2 9h2v1h-2zM5 9h1v1h-1zM2 10h3v1h-3zM2 11h2v1h-2zM2 12h1v1h-1z" fill="#000"/><path d="M9 1h2v1h-2zM9 2h2v1h-2zM7 3h1v1h-1zM6 4h1v1h-1zM6 5h1v1h-1zM5 6h1v1h-1zM5 7h1v1h-1zM4 8h1v1h-1zM4 9h1v1h-1z" fill="#ff0000"/><path d="M6 2h1v1h-1zM5 3h2v1h-2zM5 4h1v1h-1zM7 4h1v1h-1zM4 5h2v1h-2zM4 6h1v1h-1zM6 6h1v1h-1zM3 7h2v1h-2zM3 8h1v1h-1z" fill="#ffff00"/><path d="M2 13h14v1h-14z" fill="#0000ff"/></g></svg><svg style="left:594px;top:127px" width="16" height="16" viewBox="0 0 16 16"><g shape-rendering="crispEdges"><path d="M7 0h1v1h-1zM7 1h1v1h-1zM7 2h1v1h-1zM7 3h1v1h-1zM7 4h1v1h-1zM7 5h1v1h-1zM7 6h1v1h-1zM0 7h15v1h-15zM1 8h1v1h-1zM13 8h1v1h-1zM2 9h1v1h-1zM12 9h1v1h-1zM3 10h1v1h-1zM11 10h1v1h-1zM4 11h1v1h-1zM10 11h1v1h-1zM5 12h1v1h-1zM9 12h1v1h-1zM6 13h1v1h-1zM8 13h1v1h-1zM7 14h1v1h-1z" fill="#000"/><path d="M2 8h11v1h-11zM3 9h1v1h-1zM11 9h1v1h-1zM4 10h1v1h-1zM10 10h1v1h-1zM5 11h1v1h-1zM9 11h1v1h-1zM6 12h1v1h-1zM8 12h1v1h-1zM7 13h1v1h-1z" fill="#808000"/></g></svg><svg style="left:617px;top:127px" width="16" height="16" viewBox="0 0 16 16"><g shape-rendering="crispEdges"><path d="M1 1h13v1h-13zM0 2h1v1h-1zM14 2h1v1h-1zM0 3h1v1h-1zM14 3h1v1h-1zM0 4h1v1h-1zM14 4h1v1h-1zM0 5h1v1h-1zM14 5h1v1h-1zM0 6h1v1h-1zM14 6h1v1h-1zM0 7h1v1h-1zM14 7h1v1h-1zM0 8h1v1h-1zM14 8h1v1h-1zM0 9h1v1h-1zM14 9h1v1h-1zM1 10h13v1h-13zM7 11h1v1h-1zM7 12h1v1h-1zM7 13h1v1h-1zM7 14h1v1h-1z" fill="#000"/><path d="M1 2h13v1h-13zM1 3h1v1h-1zM13 3h1v1h-1zM1 4h1v1h-1zM13 4h1v1h-1zM1 5h1v1h-1zM13 5h1v1h-1zM1 6h1v1h-1zM13 6h1v1h-1zM1 7h1v1h-1zM13 7h1v1h-1zM1 8h1v1h-1zM13 8h1v1h-1zM1 9h13v1h-13z" fill="#808000"/></g><text x="7.5" y="9" text-anchor="middle" font-family="'DejaVu Sans','Liberation Sans',sans-serif" font-size="8" fill="#000" filter="url(#thr)">A</text></svg><svg style="left:640px;top:127px" width="16" height="16" viewBox="0 0 16 16"><g shape-rendering="crispEdges"><path d="M7 0h1v1h-1zM7 1h2v1h-2zM9 2h2v1h-2zM11 3h2v1h-2zM9 4h3v1h-3zM13 4h1v1h-1zM7 5h2v1h-2zM5 6h2v1h-2zM3 7h2v1h-2zM2 8h1v1h-1zM4 8h3v1h-3zM6 9h2v1h-2zM8 10h1v1h-1zM8 11h2v1h-2zM9 12h1v1h-1zM9 13h1v1h-1zM9 14h1v1h-1z" fill="#000"/></g></svg><svg style="left:663px;top:127px" width="16" height="16" viewBox="0 0 16 16"><g shape-rendering="crispEdges"><path d="M7 0h1v1h-1zM7 1h1v1h-1zM7 2h1v1h-1zM7 3h1v1h-1zM7 4h1v1h-1zM7 5h1v1h-1zM2 6h11v1h-11zM2 9h11v1h-11zM7 10h1v1h-1zM7 11h1v1h-1zM7 12h1v1h-1zM7 13h1v1h-1zM7 14h1v1h-1z" fill="#000"/></g></svg><svg style="left:686px;top:127px" width="16" height="16" viewBox="0 0 16 16"><g shape-rendering="crispEdges"><path d="M5 0h1v1h-1zM5 1h3v1h-3zM8 2h1v1h-1zM9 3h1v1h-1zM9 4h1v1h-1zM8 5h2v1h-2zM7 6h2v1h-2zM5 7h3v1h-3zM7 8h2v1h-2zM8 9h2v1h-2zM9 10h1v1h-1zM9 11h1v1h-1zM8 12h1v1h-1zM5 13h3v1h-3zM5 14h1v1h-1z" fill="#000"/></g></svg><svg style="left:709px;top:127px" width="16" height="16" viewBox="0 0 16 16"><g shape-rendering="crispEdges"><path d="M8 0h1v1h-1zM8 1h1v1h-1zM8 2h1v1h-1zM1 3h15v1h-15zM2 4h1v1h-1zM8 4h1v1h-1zM14 4h1v1h-1zM3 5h1v1h-1zM8 5h1v1h-1zM13 5h1v1h-1zM4 6h1v1h-1zM8 6h1v1h-1zM12 6h1v1h-1zM5 7h1v1h-1zM8 7h1v1h-1zM11 7h1v1h-1zM6 8h1v1h-1zM8 8h1v1h-1zM10 8h1v1h-1zM7 9h3v1h-3zM8 10h1v1h-1zM1 11h15v1h-15zM8 12h1v1h-1zM8 13h1v1h-1zM8 14h1v1h-1z" fill="#000"/><path d="M3 4h5v1h-5zM9 4h5v1h-5z" fill="#808080"/><path d="M4 5h1v1h-1zM12 5h1v1h-1z" fill="#c0c0c0"/></g></svg><svg style="left:732px;top:127px" width="16" height="16" viewBox="0 0 16 16"><g shape-rendering="crispEdges"><path d="M3 2h6v1h-6zM3 3h1v1h-1zM9 3h2v1h-2zM0 4h4v1h-4zM11 4h1v1h-1zM3 5h1v1h-1zM12 5h1v1h-1zM3 6h1v1h-1zM12 6h1v1h-1zM3 7h1v1h-1zM12 7h4v1h-4zM3 8h1v1h-1zM12 8h1v1h-1zM3 9h1v1h-1zM12 9h1v1h-1zM0 10h4v1h-4zM11 10h1v1h-1zM3 11h1v1h-1zM9 11h2v1h-2zM3 12h6v1h-6z" fill="#000"/><path d="M4 3h1v1h-1zM4 4h1v1h-1zM4 5h1v1h-1zM4 6h1v1h-1zM4 7h1v1h-1zM4 8h1v1h-1zM4 9h1v1h-1zM4 10h1v1h-1zM4 11h1v1h-1z" fill="#808080"/></g></svg><svg style="left:755px;top:127px" width="16" height="16" viewBox="0 0 16 16"><g shape-rendering="crispEdges"><path d="M2 0h3v1h-3zM8 0h3v1h-3zM2 1h1v1h-1zM5 1h1v1h-1zM7 1h1v1h-1zM10 1h2v1h-2zM3 2h1v1h-1zM5 2h1v1h-1zM7 2h1v1h-1zM9 2h1v1h-1zM12 2h1v1h-1zM3 3h1v1h-1zM6 3h1v1h-1zM9 3h1v1h-1zM11 3h1v1h-1zM13 3h1v1h-1zM4 4h1v1h-1zM6 4h1v1h-1zM8 4h1v1h-1zM11 4h1v1h-1zM13 4h1v1h-1zM4 5h1v1h-1zM9 5h1v1h-1zM13 5h1v1h-1zM1 6h2v1h-2zM4 6h1v1h-1zM8 6h1v1h-1zM11 6h1v1h-1zM14 6h1v1h-1zM0 7h1v1h-1zM3 7h2v1h-2zM14 7h1v1h-1zM0 8h1v1h-1zM4 8h1v1h-1zM13 8h1v1h-1zM1 9h1v1h-1zM13 9h1v1h-1zM2 10h1v1h-1zM12 10h1v1h-1zM3 11h1v1h-1zM11 11h1v1h-1zM4 12h1v1h-1zM11 12h1v1h-1zM5 13h1v1h-1zM10 13h1v1h-1zM5 14h6v1h-6z" fill="#000"/><path d="M3 1h2v1h-2zM8 1h2v1h-2zM4 2h1v1h-1zM8 2h1v1h-1zM10 2h2v1h-2zM4 3h2v1h-2zM7 3h2v1h-2zM10 3h1v1h-1zM12 3h1v1h-1zM5 4h1v1h-1zM7 4h1v1h-1zM9 4h2v1h-2zM12 4h1v1h-1zM5 5h4v1h-4zM10 5h3v1h-3zM5 6h3v1h-3zM9 6h2v1h-2zM12 6h2v1h-2zM1 7h2v1h-2zM5 7h6v1h-6zM12 7h2v1h-2zM1 8h3v1h-3zM5 8h6v1h-6zM12 8h1v1h-1zM2 9h11v1h-11zM3 10h9v1h-9zM4 11h7v1h-7zM5 12h6v1h-6zM6 13h4v1h-4z" fill="#fff"/><path d="M11 7h1v1h-1zM11 8h1v1h-1z" fill="#00ffff"/></g></svg><svg style="left:778px;top:127px" width="16" height="16" viewBox="0 0 16 16"><g shape-rendering="crispEdges"><path d="M5 2h2v1h-2zM8 2h2v1h-2zM4 3h1v1h-1zM7 3h1v1h-1zM10 3h2v1h-2zM3 4h2v1h-2zM7 4h1v1h-1zM10 4h1v1h-1zM13 4h1v1h-1zM2 5h1v1h-1zM5 5h1v1h-1zM8 5h1v1h-1zM11 5h1v1h-1zM14 5h1v1h-1zM1 6h1v1h-1zM5 6h1v1h-1zM8 6h1v1h-1zM14 6h1v1h-1zM1 7h1v1h-1zM6 7h1v1h-1zM14 7h1v1h-1zM2 8h1v1h-1zM14 8h1v1h-1zM3 9h1v1h-1zM13 9h1v1h-1zM4 10h1v1h-1zM12 10h1v1h-1zM4 11h1v1h-1zM11 11h1v1h-1zM4 12h1v1h-1zM11 12h1v1h-1zM4 13h8v1h-8z" fill="#000"/><path d="M5 3h2v1h-2zM8 3h2v1h-2zM5 4h2v1h-2zM8 4h2v1h-2zM11 4h2v1h-2zM3 5h2v1h-2zM6 5h2v1h-2zM9 5h2v1h-2zM12 5h2v1h-2zM2 6h3v1h-3zM6 6h2v1h-2zM9 6h5v1h-5zM2 7h4v1h-4zM7 7h7v1h-7zM3 8h11v1h-11zM4 9h9v1h-9zM5 10h7v1h-7zM5 11h6v1h-6zM5 12h6v1h-6z" fill="#fff"/></g></svg><svg style="left:801px;top:127px" width="16" height="16" viewBox="0 0 16 16"><g shape-rendering="crispEdges"><path d="M6 2h4v1h-4zM4 3h2v1h-2zM10 3h2v1h-2zM1 4h1v1h-1zM3 4h1v1h-1zM12 4h1v1h-1zM1 5h3v1h-3zM13 5h1v1h-1zM1 6h5v1h-5zM13 6h1v1h-1zM1 7h4v1h-4zM12 7h1v1h-1zM1 8h2v1h-2zM12 8h1v1h-1zM12 9h1v1h-1zM11 10h1v1h-1zM6 11h1v1h-1zM10 11h2v1h-2zM7 12h4v1h-4zM8 13h2v1h-2z" fill="#000"/><path d="M6 3h4v1h-4zM4 4h2v1h-2zM10 4h2v1h-2zM11 5h2v1h-2zM12 6h1v1h-1z" fill="#808000"/></g></svg><svg style="left:824px;top:127px" width="16" height="16" viewBox="0 0 16 16"><g shape-rendering="crispEdges"><path d="M6 2h4v1h-4zM4 3h2v1h-2zM10 3h2v1h-2zM3 4h1v1h-1zM12 4h1v1h-1zM14 4h1v1h-1zM2 5h1v1h-1zM12 5h3v1h-3zM2 6h1v1h-1zM10 6h5v1h-5zM3 7h1v1h-1zM11 7h4v1h-4zM3 8h1v1h-1zM13 8h2v1h-2zM3 9h1v1h-1zM4 10h1v1h-1zM4 11h2v1h-2zM10 11h1v1h-1zM5 12h6v1h-6zM7 13h2v1h-2z" fill="#808080"/><path d="M6 3h4v1h-4zM4 4h2v1h-2zM10 4h2v1h-2zM3 5h1v1h-1zM3 6h1v1h-1zM15 6h1v1h-1zM4 7h1v1h-1zM15 7h1v1h-1zM4 8h1v1h-1zM15 8h1v1h-1zM4 9h1v1h-1zM14 9h2v1h-2zM5 10h1v1h-1zM6 11h1v1h-1zM11 11h1v1h-1zM11 12h1v1h-1zM6 13h1v1h-1zM9 13h3v1h-3z" fill="#fff"/></g></svg><svg style="left:847px;top:127px" width="16" height="16" viewBox="0 0 16 16"><g shape-rendering="crispEdges"><path d="M6 0h5v1h-5zM4 1h2v1h-2zM11 1h2v1h-2zM14 1h1v1h-1zM3 2h1v1h-1zM12 2h3v1h-3zM2 3h1v1h-1zM11 3h4v1h-4zM1 6h5v1h-5zM8 6h7v1h-7zM1 7h1v1h-1zM8 7h1v1h-1zM10 7h1v1h-1zM13 7h1v1h-1zM1 8h1v1h-1zM8 8h1v1h-1zM10 8h1v1h-1zM13 8h1v1h-1zM1 9h4v1h-4zM8 9h1v1h-1zM10 9h1v1h-1zM13 9h1v1h-1zM1 10h1v1h-1zM8 10h1v1h-1zM10 10h1v1h-1zM13 10h1v1h-1zM1 11h1v1h-1zM8 11h1v1h-1zM10 11h1v1h-1zM13 11h1v1h-1zM1 12h1v1h-1zM8 12h1v1h-1zM10 12h1v1h-1zM13 12h1v1h-1zM1 13h1v1h-1zM8 13h1v1h-1zM13 13h1v1h-1z" fill="#808080"/><path d="M7 1h4v1h-4zM5 2h2v1h-2zM4 3h1v1h-1zM15 3h1v1h-1zM2 4h1v1h-1zM12 4h4v1h-4zM6 6h1v1h-1zM2 7h5v1h-5zM9 7h1v1h-1zM11 7h2v1h-2zM14 7h1v1h-1zM2 8h1v1h-1zM9 8h1v1h-1zM11 8h1v1h-1zM14 8h1v1h-1zM5 9h1v1h-1zM9 9h1v1h-1zM11 9h1v1h-1zM14 9h1v1h-1zM2 10h4v1h-4zM9 10h1v1h-1zM11 10h1v1h-1zM14 10h1v1h-1zM2 11h1v1h-1zM9 11h1v1h-1zM11 11h1v1h-1zM14 11h1v1h-1zM2 12h1v1h-1zM9 12h1v1h-1zM11 12h1v1h-1zM14 12h1v1h-1zM2 13h1v1h-1zM9 13h1v1h-1zM11 13h1v1h-1zM14 13h1v1h-1zM2 14h1v1h-1zM9 14h1v1h-1zM14 14h1v1h-1z" fill="#fff"/></g></svg><svg style="left:870px;top:127px" width="16" height="16" viewBox="0 0 16 16"><g shape-rendering="crispEdges"><path d="M6 0h5v1h-5zM4 1h2v1h-2zM11 1h2v1h-2zM14 1h1v1h-1zM3 2h1v1h-1zM12 2h3v1h-3zM2 3h1v1h-1zM11 3h4v1h-4zM1 6h5v1h-5zM10 6h5v1h-5zM1 7h1v1h-1zM14 7h1v1h-1zM1 8h1v1h-1zM14 8h1v1h-1zM1 9h4v1h-4zM11 9h4v1h-4zM1 10h1v1h-1zM14 10h1v1h-1zM1 11h1v1h-1zM14 11h1v1h-1zM1 12h1v1h-1zM14 12h1v1h-1zM1 13h1v1h-1zM14 13h1v1h-1z" fill="#808080"/><path d="M7 1h4v1h-4zM5 2h2v1h-2zM4 3h1v1h-1zM15 3h1v1h-1zM2 4h1v1h-1zM12 4h4v1h-4zM6 6h1v1h-1zM2 7h5v1h-5zM10 7h4v1h-4zM15 7h1v1h-1zM2 8h1v1h-1zM15 8h1v1h-1zM5 9h1v1h-1zM15 9h1v1h-1zM2 10h4v1h-4zM12 10h2v1h-2zM15 10h1v1h-1zM2 11h1v1h-1zM15 11h1v1h-1zM2 12h1v1h-1zM15 12h1v1h-1zM2 13h1v1h-1zM15 13h1v1h-1zM2 14h1v1h-1zM15 14h1v1h-1z" fill="#fff"/></g></svg><svg style="left:893px;top:127px" width="16" height="16" viewBox="0 0 16 16"><text x="0.5" y="12.5" font-family="'Liberation Serif',serif" font-size="13" font-weight="bold" font-style="italic" fill="#000" textLength="15" lengthAdjust="spacingAndGlyphs" filter="url(#thr)">Aa</text></svg><svg style="left:916px;top:127px" width="16" height="16" viewBox="0 0 16 16"><text x="0" y="11" font-family="'DejaVu Sans Condensed','Liberation Sans',sans-serif" font-size="11" fill="#000" textLength="15" lengthAdjust="spacingAndGlyphs" filter="url(#thr)">.op</text></svg><div style="left:942px;top:121px;width:1px;height:28px;background:#808080;"></div><div style="left:943px;top:121px;width:1px;height:28px;background:#fff;"></div><div style="left:0px;top:149px;width:1279px;height:1px;background:#808080;"></div><div style="left:1px;top:150px;width:1277px;height:1px;background:#404040;"></div><div style="left:0px;top:149px;width:1px;height:1000px;background:#808080;"></div><div style="left:1px;top:150px;width:1px;height:1000px;background:#404040;"></div><div style="left:1279px;top:149px;width:1px;height:1000px;background:#fff;"></div><div style="left:1278px;top:150px;width:1px;height:1000px;background:#d4d0c8;"></div><div style="left:5px;top:153px;width:81px;height:1px;background:#fff;"></div><div style="left:4px;top:154px;width:1px;height:19px;background:#fff;"></div><div style="left:5px;top:172px;width:81px;height:1px;background:#fff;"></div><div style="left:85px;top:154px;width:1px;height:19px;background:#fff;"></div><svg style="left:10px;top:156px" width="16" height="16" viewBox="0 0 16 16"><g shape-rendering="crispEdges"><path d="M2 0h1v1h-1zM0 1h3v1h-3zM2 2h1v1h-1zM2 3h1v1h-1zM0 4h3v1h-3zM2 5h1v1h-1zM2 6h1v1h-1zM0 7h3v1h-3zM2 9h1v1h-1zM0 10h3v1h-3zM2 11h1v1h-1zM2 12h1v1h-1zM0 13h16v1h-16zM2 14h1v1h-1zM5 14h1v1h-1zM8 14h1v1h-1zM11 14h1v1h-1zM14 14h1v1h-1zM2 15h1v1h-1zM5 15h1v1h-1zM8 15h1v1h-1zM11 15h1v1h-1zM14 15h1v1h-1z" fill="#000"/><path d="M3 0h13v1h-13zM3 1h1v1h-1zM5 1h1v1h-1zM7 1h1v1h-1zM9 1h1v1h-1zM11 1h1v1h-1zM13 1h1v1h-1zM15 1h1v1h-1zM3 2h13v1h-13zM3 3h1v1h-1zM5 3h1v1h-1zM7 3h1v1h-1zM9 3h1v1h-1zM11 3h1v1h-1zM13 3h1v1h-1zM3 4h3v1h-3zM10 4h3v1h-3zM15 4h1v1h-1zM3 5h2v1h-2zM11 5h1v1h-1zM15 5h1v1h-1zM3 6h1v1h-1zM7 6h2v1h-2zM15 6h1v1h-1zM6 7h4v1h-4zM13 7h3v1h-3zM5 8h1v1h-1zM7 8h1v1h-1zM9 8h1v1h-1zM11 8h1v1h-1zM13 8h1v1h-1zM15 8h1v1h-1zM3 9h13v1h-13zM3 10h1v1h-1zM5 10h1v1h-1zM7 10h1v1h-1zM9 10h1v1h-1zM11 10h1v1h-1zM13 10h1v1h-1zM15 10h1v1h-1zM3 11h13v1h-13zM3 12h1v1h-1zM5 12h1v1h-1zM7 12h1v1h-1zM9 12h1v1h-1zM11 12h1v1h-1zM13 12h1v1h-1zM15 12h1v1h-1z" fill="#c0c0c0"/><path d="M4 1h1v1h-1zM6 1h1v1h-1zM8 1h1v1h-1zM10 1h1v1h-1zM12 1h1v1h-1zM14 1h1v1h-1zM4 3h1v1h-1zM6 3h1v1h-1zM8 3h1v1h-1zM10 3h1v1h-1zM12 3h1v1h-1zM14 6h1v1h-1zM6 8h1v1h-1zM8 8h1v1h-1zM10 8h1v1h-1zM12 8h1v1h-1zM14 8h1v1h-1zM4 10h1v1h-1zM6 10h1v1h-1zM8 10h1v1h-1zM10 10h1v1h-1zM12 10h1v1h-1zM14 10h1v1h-1zM4 12h1v1h-1zM6 12h1v1h-1zM8 12h1v1h-1zM10 12h1v1h-1zM12 12h1v1h-1zM14 12h1v1h-1z" fill="#808080"/><path d="M14 3h2v1h-2zM6 4h4v1h-4zM13 4h2v1h-2zM5 5h6v1h-6zM12 5h3v1h-3zM4 6h3v1h-3zM9 6h5v1h-5zM3 7h3v1h-3zM10 7h3v1h-3zM2 8h3v1h-3z" fill="#ff0000"/></g></svg><div class="t" style="left:32px;top:158px;font-family:'DejaVu Sans Condensed','DejaVu Sans','Liberation Sans',sans-serif;font-size:11px;color:#000;white-space:nowrap;line-height:14px;height:14px;letter-spacing:-0.3px;">Draft3.raw</div><div style="left:87px;top:151px;width:104px;height:1px;background:#fff;"></div><div style="left:86px;top:152px;width:1px;height:1px;background:#fff;"></div><div style="left:85px;top:153px;width:1px;height:20px;background:#fff;"></div><div style="left:191px;top:153px;width:1px;height:21px;background:#404040;"></div><div style="left:190px;top:154px;width:1px;height:20px;background:#808080;"></div><svg style="left:94px;top:153px" width="16" height="16" viewBox="0 0 16 16"><g shape-rendering="crispEdges"><path d="M10 0h1v1h-1zM9 1h1v1h-1zM8 2h1v1h-1zM4 3h2v1h-2zM7 3h1v1h-1zM4 4h3v1h-3zM4 5h2v1h-2zM4 6h2v1h-2zM1 7h5v1h-5zM4 8h2v1h-2zM4 9h2v1h-2zM4 10h3v1h-3zM4 11h2v1h-2zM7 11h1v1h-1zM8 12h1v1h-1zM10 12h1v1h-1zM9 13h2v1h-2zM8 14h3v1h-3z" fill="#0000ff"/></g></svg><div class="t" style="left:115px;top:156px;font-family:'DejaVu Sans Condensed','DejaVu Sans','Liberation Sans',sans-serif;font-size:11px;color:#000;white-space:nowrap;line-height:14px;height:14px;letter-spacing:-0.1px;">SyntDiode.asc</div><div style="left:2px;top:173px;width:3px;height:1px;background:#fff;"></div><div style="left:192px;top:173px;width:1086px;height:1px;background:#fff;"></div><div style="left:2px;top:174px;width:1276px;height:1px;background:#808080;"></div><div style="left:2px;top:175px;width:1276px;height:1px;background:#404040;"></div><div style="left:2px;top:178px;width:1276px;height:438px;background:#d4d0c8;box-shadow:inset -1px -1px 0 #404040,inset 1px 1px 0 #d4d0c8,inset -2px -2px 0 #808080,inset 2px 2px 0 #fff;"></div><div style="left:6px;top:182px;width:1268px;height:18px;background:linear-gradient(to right,#808080 0%,#c0c0c0 100%);"></div><svg style="left:8px;top:183px" width="16" height="16" viewBox="0 0 16 16"><g shape-rendering="crispEdges"><path d="M2 0h1v1h-1zM0 1h3v1h-3zM2 2h1v1h-1zM2 3h1v1h-1zM0 4h3v1h-3zM2 5h1v1h-1zM2 6h1v1h-1zM0 7h3v1h-3zM2 9h1v1h-1zM0 10h3v1h-3zM2 11h1v1h-1zM2 12h1v1h-1zM0 13h16v1h-16zM2 14h1v1h-1zM5 14h1v1h-1zM8 14h1v1h-1zM11 14h1v1h-1zM14 14h1v1h-1zM2 15h1v1h-1zM5 15h1v1h-1zM8 15h1v1h-1zM11 15h1v1h-1zM14 15h1v1h-1z" fill="#000"/><path d="M3 0h13v1h-13zM3 1h1v1h-1zM5 1h1v1h-1zM7 1h1v1h-1zM9 1h1v1h-1zM11 1h1v1h-1zM13 1h1v1h-1zM15 1h1v1h-1zM3 2h13v1h-13zM3 3h1v1h-1zM5 3h1v1h-1zM7 3h1v1h-1zM9 3h1v1h-1zM11 3h1v1h-1zM13 3h1v1h-1zM3 4h3v1h-3zM10 4h3v1h-3zM15 4h1v1h-1zM3 5h2v1h-2zM11 5h1v1h-1zM15 5h1v1h-1zM3 6h1v1h-1zM7 6h2v1h-2zM15 6h1v1h-1zM6 7h4v1h-4zM13 7h3v1h-3zM5 8h1v1h-1zM7 8h1v1h-1zM9 8h1v1h-1zM11 8h1v1h-1zM13 8h1v1h-1zM15 8h1v1h-1zM3 9h13v1h-13zM3 10h1v1h-1zM5 10h1v1h-1zM7 10h1v1h-1zM9 10h1v1h-1zM11 10h1v1h-1zM13 10h1v1h-1zM15 10h1v1h-1zM3 11h13v1h-13zM3 12h1v1h-1zM5 12h1v1h-1zM7 12h1v1h-1zM9 12h1v1h-1zM11 12h1v1h-1zM13 12h1v1h-1zM15 12h1v1h-1z" fill="#c0c0c0"/><path d="M4 1h1v1h-1zM6 1h1v1h-1zM8 1h1v1h-1zM10 1h1v1h-1zM12 1h1v1h-1zM14 1h1v1h-1zM4 3h1v1h-1zM6 3h1v1h-1zM8 3h1v1h-1zM10 3h1v1h-1zM12 3h1v1h-1zM14 6h1v1h-1zM6 8h1v1h-1zM8 8h1v1h-1zM10 8h1v1h-1zM12 8h1v1h-1zM14 8h1v1h-1zM4 10h1v1h-1zM6 10h1v1h-1zM8 10h1v1h-1zM10 10h1v1h-1zM12 10h1v1h-1zM14 10h1v1h-1zM4 12h1v1h-1zM6 12h1v1h-1zM8 12h1v1h-1zM10 12h1v1h-1zM12 12h1v1h-1zM14 12h1v1h-1z" fill="#808080"/><path d="M14 3h2v1h-2zM6 4h4v1h-4zM13 4h2v1h-2zM5 5h6v1h-6zM12 5h3v1h-3zM4 6h3v1h-3zM9 6h5v1h-5zM3 7h3v1h-3zM10 7h3v1h-3zM2 8h3v1h-3z" fill="#ff0000"/></g></svg><div class="t" style="left:25px;top:185px;font-family:'DejaVu Sans Condensed','DejaVu Sans','Liberation Sans',sans-serif;font-size:11px;color:#d4d0c8;white-space:nowrap;line-height:14px;height:14px;font-weight:bold;">Draft3.raw</div><div style="left:1256px;top:184px;width:16px;height:14px;background:#d4d0c8;box-shadow:inset -1px -1px 0 #404040,inset 1px 1px 0 #fff,inset -2px -2px 0 #808080;"><svg style="left:4px;top:3px" width="8" height="7" viewBox="0 0 8 7" shape-rendering="crispEdges"><path d="M0 0h2v1h1v1h2v-1h1v-1h2v1h-1v1h-1v1h-1v1h1v1h1v1h1v1h-2v-1h-1v-1h-2v1h-1v1h-2v-1h1v-1h1v-1h1v-1h-1v-1h-1v-1h-1z" fill="#000"/></svg></div><div style="left:1238px;top:184px;width:16px;height:14px;background:#d4d0c8;box-shadow:inset -1px -1px 0 #404040,inset 1px 1px 0 #fff,inset -2px -2px 0 #808080;"><div style="left:3px;top:2px;width:9px;height:9px;box-sizing:border-box;border:1px solid #000;border-top-width:2px"></div></div><div style="left:1222px;top:184px;width:16px;height:14px;background:#d4d0c8;box-shadow:inset -1px -1px 0 #404040,inset 1px 1px 0 #fff,inset -2px -2px 0 #808080;"><div style="left:4px;top:9px;width:6px;height:2px;background:#000"></div></div><div style="left:6px;top:201px;width:1268px;height:411px;box-shadow:inset -1px -1px 0 #fff,inset 1px 1px 0 #808080,inset -2px -2px 0 #d4d0c8,inset 2px 2px 0 #404040;"></div><svg style="left:8px;top:203px" width="1264" height="407" viewBox="8 203 1264 407" shape-rendering="crispEdges"><rect x="8" y="203" width="1264" height="407" fill="#000"/><path d="M56 254.5H1212M56 287.5H1212M56 320.5H1212M56 353.5H1212M56 386.5H1212M56 419.5H1212M56 452.5H1212M56 485.5H1212M56 518.5H1212M56 551.5H1212M161.5 221V584M266.5 221V584M371.5 221V584M476.5 221V584M581.5 221V584M687.5 221V584M792.5 221V584M897.5 221V584M1002.5 221V584M1107.5 221V584" stroke="#808080" stroke-width="1" stroke-dasharray="3 3" fill="none"/><path d="M56.5 221V585M1212.5 221V585M56 221.5H1213M56 584.5H1213M49 221.5H56M1212 221.5H1220M56.5 584V591M49 254.5H56M1212 254.5H1220M161.5 584V591M49 287.5H56M1212 287.5H1220M266.5 584V591M49 320.5H56M1212 320.5H1220M371.5 584V591M49 353.5H56M1212 353.5H1220M476.5 584V591M49 386.5H56M1212 386.5H1220M581.5 584V591M49 419.5H56M1212 419.5H1220M687.5 584V591M49 452.5H56M1212 452.5H1220M792.5 584V591M49 485.5H56M1212 485.5H1220M897.5 584V591M49 518.5H56M1212 518.5H1220M1002.5 584V591M49 551.5H56M1212 551.5H1220M1107.5 584V591M49 584.5H56M1212 584.5H1220M1212.5 584V591" stroke="#c0c0c0" stroke-width="1" fill="none"/><g shape-rendering="crispEdges"><polyline points="56.0,507.5 66.0,507.5 66.0,508.9 68.8,509.3 71.6,509.7 74.3,510.1 77.1,510.5 79.9,510.9 82.7,511.3 85.5,511.6 88.3,512.0 91.0,512.4 93.8,512.8 96.6,513.2 99.4,513.5 102.2,513.9 105.0,514.2 107.7,514.6 110.5,515.0 113.3,515.3 116.1,515.6 118.9,516.0 121.7,516.3 124.4,516.6 127.2,517.0 130.0,517.3 132.8,517.6 135.6,517.9 138.4,518.2 141.1,518.5 143.9,518.8 146.7,519.0 149.5,519.3 152.3,519.6 155.1,519.8 157.8,520.1 160.6,520.3 163.4,520.5 166.2,520.7 169.0,521.0 171.8,521.2 174.5,521.4 177.3,521.6 180.1,521.7 182.9,521.9 185.7,522.1 188.5,522.2 191.2,522.4 194.0,522.5 196.8,522.6 199.6,522.7 202.4,522.8 205.2,522.9 207.9,523.0 210.7,523.1 213.5,523.2 216.3,523.2 219.1,523.3 221.9,523.3 224.6,523.3 227.4,523.4 230.2,523.4 233.0,523.4 235.8,523.4 238.6,523.3 241.3,523.3 244.1,523.3 246.9,523.2 249.7,523.1 252.5,523.1 255.3,523.0 258.0,522.9 260.8,522.8 263.6,522.7 266.4,522.6 269.2,522.5 272.0,522.3 274.7,522.2 277.5,522.0 280.3,521.8 283.1,521.7 285.9,521.5 288.7,521.3 291.4,521.1 294.2,520.9 297.0,520.7 299.8,520.5 302.6,520.2 305.4,520.0 308.1,519.7 310.9,519.5 313.7,519.2 316.5,518.9 319.3,518.7 322.1,518.4 324.8,518.1 327.6,517.8 330.4,517.5 333.2,517.2 336.0,516.9 338.8,516.5 341.5,516.2 344.3,515.9 347.1,515.5 349.9,515.2 352.7,514.8 355.5,514.5 358.2,514.1 361.0,513.8 363.8,513.4 366.6,513.0 369.4,512.7 372.2,512.3 374.9,511.9 377.7,511.5 380.5,511.1 383.3,510.8 386.1,510.4 388.9,510.0 391.6,509.6 394.4,509.2 397.2,508.8 400.0,508.4 400.0,507.5 766.6,507.5 766.6,508.9 769.4,509.3 772.2,509.7 774.9,510.1 777.7,510.5 780.5,510.9 783.3,511.3 786.1,511.6 788.9,512.0 791.6,512.4 794.4,512.8 797.2,513.2 800.0,513.5 802.8,513.9 805.6,514.2 808.3,514.6 811.1,515.0 813.9,515.3 816.7,515.6 819.5,516.0 822.3,516.3 825.0,516.6 827.8,517.0 830.6,517.3 833.4,517.6 836.2,517.9 839.0,518.2 841.7,518.5 844.5,518.8 847.3,519.0 850.1,519.3 852.9,519.6 855.7,519.8 858.4,520.1 861.2,520.3 864.0,520.5 866.8,520.7 869.6,521.0 872.4,521.2 875.1,521.4 877.9,521.6 880.7,521.7 883.5,521.9 886.3,522.1 889.1,522.2 891.8,522.4 894.6,522.5 897.4,522.6 900.2,522.7 903.0,522.8 905.8,522.9 908.5,523.0 911.3,523.1 914.1,523.2 916.9,523.2 919.7,523.3 922.5,523.3 925.2,523.3 928.0,523.4 930.8,523.4 933.6,523.4 936.4,523.4 939.2,523.3 941.9,523.3 944.7,523.3 947.5,523.2 950.3,523.1 953.1,523.1 955.9,523.0 958.6,522.9 961.4,522.8 964.2,522.7 967.0,522.6 969.8,522.5 972.6,522.3 975.3,522.2 978.1,522.0 980.9,521.8 983.7,521.7 986.5,521.5 989.3,521.3 992.0,521.1 994.8,520.9 997.6,520.7 1000.4,520.5 1003.2,520.2 1006.0,520.0 1008.7,519.7 1011.5,519.5 1014.3,519.2 1017.1,518.9 1019.9,518.7 1022.7,518.4 1025.5,518.1 1028.2,517.8 1031.0,517.5 1033.8,517.2 1036.6,516.9 1039.4,516.5 1042.2,516.2 1044.9,515.9 1047.7,515.5 1050.5,515.2 1053.3,514.8 1056.1,514.5 1058.9,514.1 1061.6,513.8 1064.4,513.4 1067.2,513.0 1070.0,512.7 1072.8,512.3 1075.6,511.9 1078.3,511.5 1081.1,511.1 1083.9,510.8 1086.7,510.4 1089.5,510.0 1092.3,509.6 1095.0,509.2 1097.8,508.8 1100.6,508.4 1100.6,507.5 1212.0,507.5" fill="none" stroke="#00ff00" stroke-width="1"/><polyline points="56.0,507.5 56.1,507.6 56.2,507.8 56.2,507.9 56.3,508.0 56.4,508.2 56.5,508.3 56.6,508.5 56.7,508.6 56.7,508.7 56.8,508.9 56.9,509.0 57.0,509.1 57.1,509.3 57.2,509.4 57.2,509.6 57.3,509.7 57.4,509.8 57.5,510.0 57.6,510.1 57.7,510.2 57.7,510.4 57.8,510.5 57.9,510.6 58.0,510.8 58.1,510.9 58.2,511.1 58.2,511.2 58.3,511.3 58.4,511.5 58.5,511.6 58.6,511.7 58.7,511.9 58.7,512.0 58.8,512.1 58.9,512.3 59.0,512.4 59.1,512.6 59.2,512.7 59.2,512.8 59.3,513.0 59.4,513.1 59.5,513.2 59.6,513.4 59.7,513.5 59.7,513.7 59.8,513.8 59.9,513.9 60.0,514.1 60.1,514.2 60.2,514.3 60.2,514.5 60.3,514.6 60.4,514.7 60.5,514.9 60.6,515.0 60.7,515.2 60.7,515.3 60.8,515.4 60.9,515.6 61.0,515.7 61.1,515.8 61.2,516.0 61.2,516.1 61.3,516.2 61.4,516.4 61.5,516.5 61.6,516.7 61.7,516.8 61.7,516.9 61.8,517.1 61.9,517.2 62.0,517.3 62.1,517.5 62.2,517.6 62.2,517.8 62.3,517.9 62.4,518.0 62.5,518.2 62.6,518.3 62.7,518.4 62.7,518.6 62.8,518.7 62.9,518.8 63.0,519.0 63.1,519.1 63.2,519.3 63.2,519.4 63.3,519.5 63.4,519.7 63.5,519.8 63.6,519.9 63.7,520.1 63.7,520.2 63.8,520.3 63.9,520.5 64.0,520.6 64.1,520.8 64.2,520.9 64.2,521.0 64.3,521.2 64.4,521.3 64.5,521.4 64.6,521.6 64.7,521.7 64.7,521.8 64.8,522.0 64.9,522.1 65.0,522.3 65.1,522.4 65.2,522.5 65.2,522.7 65.3,522.8 65.4,522.9 65.5,523.1 65.6,523.2 65.7,523.3 65.7,523.5 65.8,523.6 65.9,523.8 66.0,523.9 66.0,510.1 68.8,510.5 71.6,511.0 74.3,511.4 77.1,511.8 79.9,512.3 82.7,512.7 85.5,513.1 88.3,513.6 91.0,514.0 93.8,514.4 96.6,514.8 99.4,515.2 102.2,515.6 105.0,516.0 107.7,516.4 110.5,516.8 113.3,517.2 116.1,517.6 118.9,518.0 121.7,518.3 124.4,518.7 127.2,519.1 130.0,519.4 132.8,519.8 135.6,520.1 138.4,520.4 141.1,520.7 143.9,521.1 146.7,521.4 149.5,521.7 152.3,522.0 155.1,522.2 157.8,522.5 160.6,522.8 163.4,523.0 166.2,523.3 169.0,523.5 171.8,523.8 174.5,524.0 177.3,524.2 180.1,524.4 182.9,524.6 185.7,524.8 188.5,524.9 191.2,525.1 194.0,525.2 196.8,525.4 199.6,525.5 202.4,525.6 205.2,525.7 207.9,525.8 210.7,525.9 213.5,526.0 216.3,526.1 219.1,526.1 221.9,526.2 224.6,526.2 227.4,526.2 230.2,526.2 233.0,526.2 235.8,526.2 238.6,526.2 241.3,526.1 244.1,526.1 246.9,526.0 249.7,526.0 252.5,525.9 255.3,525.8 258.0,525.7 260.8,525.6 263.6,525.5 266.4,525.3 269.2,525.2 272.0,525.0 274.7,524.9 277.5,524.7 280.3,524.5 283.1,524.3 285.9,524.1 288.7,523.9 291.4,523.7 294.2,523.5 297.0,523.2 299.8,523.0 302.6,522.7 305.4,522.4 308.1,522.2 310.9,521.9 313.7,521.6 316.5,521.3 319.3,521.0 322.1,520.6 324.8,520.3 327.6,520.0 330.4,519.6 333.2,519.3 336.0,518.9 338.8,518.6 341.5,518.2 344.3,517.8 347.1,517.5 349.9,517.1 352.7,516.7 355.5,516.3 358.2,515.9 361.0,515.5 363.8,515.1 366.6,514.7 369.4,514.3 372.2,513.8 374.9,513.4 377.7,513.0 380.5,512.6 383.3,512.1 386.1,511.7 388.9,511.3 391.6,510.8 394.4,510.4 397.2,509.9 400.0,509.5 400.0,517.9 403.1,512.8 406.1,507.8 409.2,502.8 412.2,497.8 415.3,492.8 418.3,487.8 421.4,482.8 424.4,477.8 427.5,472.9 430.5,468.0 433.6,463.1 436.7,458.2 439.7,453.4 442.8,448.6 445.8,443.9 448.9,439.2 451.9,434.6 455.0,430.0 458.0,425.5 461.1,421.0 464.2,416.6 467.2,412.3 470.3,408.0 473.3,403.9 476.4,399.7 479.4,395.7 482.5,391.8 485.5,387.9 488.6,384.2 491.6,380.5 494.7,376.9 497.8,373.5 500.8,370.1 503.9,366.8 506.9,363.6 510.0,360.6 513.0,357.6 516.1,354.8 519.1,352.1 522.2,349.5 525.2,347.0 528.3,344.6 531.4,342.4 534.4,340.3 537.5,338.3 540.5,336.4 543.6,334.7 546.6,333.1 549.7,331.6 552.7,330.2 555.8,329.0 558.9,328.0 561.9,327.0 565.0,326.2 568.0,325.5 571.1,325.0 574.1,324.6 577.2,324.3 580.2,324.2 583.3,324.2 586.3,324.4 589.4,324.7 592.5,325.1 595.5,325.7 598.6,326.4 601.6,327.2 604.7,328.2 607.7,329.3 610.8,330.5 613.8,331.9 616.9,333.4 620.0,335.0 623.0,336.8 626.1,338.7 629.1,340.7 632.2,342.8 635.2,345.1 638.3,347.5 641.3,350.0 644.4,352.6 647.4,355.4 650.5,358.2 653.6,361.2 656.6,364.3 659.7,367.5 662.7,370.8 665.8,374.2 668.8,377.7 671.9,381.2 674.9,384.9 678.0,388.7 681.1,392.6 684.1,396.5 687.2,400.6 690.2,404.7 693.3,408.9 696.3,413.2 699.4,417.5 702.4,421.9 705.5,426.4 708.5,430.9 711.6,435.5 714.7,440.2 717.7,444.8 720.8,449.6 723.8,454.4 726.9,459.2 729.9,464.1 733.0,469.0 736.0,473.9 739.1,478.8 742.2,483.8 745.2,488.8 748.3,493.8 751.3,498.8 754.4,503.8 757.4,508.8 760.5,513.9 763.5,518.9 766.6,523.9 766.6,510.1 769.4,510.5 772.2,511.0 774.9,511.4 777.7,511.8 780.5,512.3 783.3,512.7 786.1,513.1 788.9,513.6 791.6,514.0 794.4,514.4 797.2,514.8 800.0,515.2 802.8,515.6 805.6,516.0 808.3,516.4 811.1,516.8 813.9,517.2 816.7,517.6 819.5,518.0 822.3,518.3 825.0,518.7 827.8,519.1 830.6,519.4 833.4,519.8 836.2,520.1 839.0,520.4 841.7,520.7 844.5,521.1 847.3,521.4 850.1,521.7 852.9,522.0 855.7,522.2 858.4,522.5 861.2,522.8 864.0,523.0 866.8,523.3 869.6,523.5 872.4,523.8 875.1,524.0 877.9,524.2 880.7,524.4 883.5,524.6 886.3,524.8 889.1,524.9 891.8,525.1 894.6,525.2 897.4,525.4 900.2,525.5 903.0,525.6 905.8,525.7 908.5,525.8 911.3,525.9 914.1,526.0 916.9,526.1 919.7,526.1 922.5,526.2 925.2,526.2 928.0,526.2 930.8,526.2 933.6,526.2 936.4,526.2 939.2,526.2 941.9,526.1 944.7,526.1 947.5,526.0 950.3,526.0 953.1,525.9 955.9,525.8 958.6,525.7 961.4,525.6 964.2,525.5 967.0,525.3 969.8,525.2 972.6,525.0 975.3,524.9 978.1,524.7 980.9,524.5 983.7,524.3 986.5,524.1 989.3,523.9 992.0,523.7 994.8,523.5 997.6,523.2 1000.4,523.0 1003.2,522.7 1006.0,522.4 1008.7,522.2 1011.5,521.9 1014.3,521.6 1017.1,521.3 1019.9,521.0 1022.7,520.6 1025.5,520.3 1028.2,520.0 1031.0,519.6 1033.8,519.3 1036.6,518.9 1039.4,518.6 1042.2,518.2 1044.9,517.8 1047.7,517.5 1050.5,517.1 1053.3,516.7 1056.1,516.3 1058.9,515.9 1061.6,515.5 1064.4,515.1 1067.2,514.7 1070.0,514.3 1072.8,513.8 1075.6,513.4 1078.3,513.0 1081.1,512.6 1083.9,512.1 1086.7,511.7 1089.5,511.3 1092.3,510.8 1095.0,510.4 1097.8,509.9 1100.6,509.5 1100.6,517.9 1101.5,516.3 1102.5,514.8 1103.4,513.3 1104.3,511.8 1105.2,510.2 1106.2,508.7 1107.1,507.2 1108.0,505.7 1109.0,504.1 1109.9,502.6 1110.8,501.1 1111.7,499.6 1112.7,498.0 1113.6,496.5 1114.5,495.0 1115.5,493.5 1116.4,491.9 1117.3,490.4 1118.2,488.9 1119.2,487.4 1120.1,485.9 1121.0,484.4 1122.0,482.8 1122.9,481.3 1123.8,479.8 1124.7,478.3 1125.7,476.8 1126.6,475.3 1127.5,473.8 1128.5,472.3 1129.4,470.8 1130.3,469.3 1131.2,467.8 1132.2,466.3 1133.1,464.8 1134.0,463.4 1135.0,461.9 1135.9,460.4 1136.8,458.9 1137.7,457.5 1138.7,456.0 1139.6,454.5 1140.5,453.1 1141.4,451.6 1142.4,450.2 1143.3,448.7 1144.2,447.3 1145.2,445.8 1146.1,444.4 1147.0,443.0 1147.9,441.6 1148.9,440.1 1149.8,438.7 1150.7,437.3 1151.7,435.9 1152.6,434.5 1153.5,433.1 1154.4,431.7 1155.4,430.3 1156.3,428.9 1157.2,427.6 1158.2,426.2 1159.1,424.8 1160.0,423.5 1160.9,422.1 1161.9,420.8 1162.8,419.4 1163.7,418.1 1164.7,416.8 1165.6,415.4 1166.5,414.1 1167.4,412.8 1168.4,411.5 1169.3,410.2 1170.2,408.9 1171.2,407.6 1172.1,406.4 1173.0,405.1 1173.9,403.8 1174.9,402.6 1175.8,401.3 1176.7,400.1 1177.7,398.9 1178.6,397.6 1179.5,396.4 1180.4,395.2 1181.4,394.0 1182.3,392.8 1183.2,391.6 1184.2,390.4 1185.1,389.3 1186.0,388.1 1186.9,387.0 1187.9,385.8 1188.8,384.7 1189.7,383.5 1190.6,382.4 1191.6,381.3 1192.5,380.2 1193.4,379.1 1194.4,378.0 1195.3,377.0 1196.2,375.9 1197.1,374.8 1198.1,373.8 1199.0,372.7 1199.9,371.7 1200.9,370.7 1201.8,369.7 1202.7,368.7 1203.6,367.7 1204.6,366.7 1205.5,365.7 1206.4,364.8 1207.4,363.8 1208.3,362.9 1209.2,361.9 1210.1,361.0 1211.1,360.1 1212.0,359.2" fill="none" stroke="#ff0000" stroke-width="1"/><polyline points="56.0,518.5 66.0,518.5 66.0,397.5 66.0,496.5 68.8,490.4 71.6,484.3 74.3,478.2 77.1,472.2 79.9,466.2 82.7,460.2 85.5,454.2 88.3,448.3 91.0,442.5 93.8,436.7 96.6,430.9 99.4,425.2 102.2,419.5 105.0,413.9 107.7,408.4 110.5,403.0 113.3,397.6 116.1,392.3 118.9,387.0 121.7,381.9 124.4,376.8 127.2,371.8 130.0,367.0 132.8,362.2 135.6,357.5 138.4,352.9 141.1,348.4 143.9,344.0 146.7,339.7 149.5,335.6 152.3,331.5 155.1,327.6 157.8,323.8 160.6,320.1 163.4,316.5 166.2,313.1 169.0,309.8 171.8,306.6 174.5,303.5 177.3,300.6 180.1,297.8 182.9,295.2 185.7,292.7 188.5,290.3 191.2,288.1 194.0,286.0 196.8,284.1 199.6,282.3 202.4,280.6 205.2,279.2 207.9,277.8 210.7,276.6 213.5,275.6 216.3,274.7 219.1,273.9 221.9,273.4 224.6,272.9 227.4,272.6 230.2,272.5 233.0,272.5 235.8,272.7 238.6,273.0 241.3,273.5 244.1,274.2 246.9,275.0 249.7,275.9 252.5,277.0 255.3,278.2 258.0,279.6 260.8,281.2 263.6,282.8 266.4,284.7 269.2,286.7 272.0,288.8 274.7,291.1 277.5,293.5 280.3,296.0 283.1,298.7 285.9,301.5 288.7,304.5 291.4,307.6 294.2,310.8 297.0,314.2 299.8,317.7 302.6,321.3 305.4,325.0 308.1,328.8 310.9,332.8 313.7,336.9 316.5,341.1 319.3,345.4 322.1,349.8 324.8,354.4 327.6,359.0 330.4,363.7 333.2,368.5 336.0,373.4 338.8,378.4 341.5,383.5 344.3,388.7 347.1,394.0 349.9,399.3 352.7,404.7 355.5,410.2 358.2,415.7 361.0,421.3 363.8,427.0 366.6,432.7 369.4,438.5 372.2,444.4 374.9,450.2 377.7,456.2 380.5,462.1 383.3,468.1 386.1,474.1 388.9,480.2 391.6,486.3 394.4,492.4 397.2,498.5 400.0,504.6 400.0,518.5 766.6,518.5 766.6,397.5 766.6,496.5 769.4,490.4 772.2,484.3 774.9,478.2 777.7,472.2 780.5,466.2 783.3,460.2 786.1,454.2 788.9,448.3 791.6,442.5 794.4,436.7 797.2,430.9 800.0,425.2 802.8,419.5 805.6,413.9 808.3,408.4 811.1,403.0 813.9,397.6 816.7,392.3 819.5,387.0 822.3,381.9 825.0,376.8 827.8,371.8 830.6,367.0 833.4,362.2 836.2,357.5 839.0,352.9 841.7,348.4 844.5,344.0 847.3,339.7 850.1,335.6 852.9,331.5 855.7,327.6 858.4,323.8 861.2,320.1 864.0,316.5 866.8,313.1 869.6,309.8 872.4,306.6 875.1,303.5 877.9,300.6 880.7,297.8 883.5,295.2 886.3,292.7 889.1,290.3 891.8,288.1 894.6,286.0 897.4,284.1 900.2,282.3 903.0,280.6 905.8,279.2 908.5,277.8 911.3,276.6 914.1,275.6 916.9,274.7 919.7,273.9 922.5,273.4 925.2,272.9 928.0,272.6 930.8,272.5 933.6,272.5 936.4,272.7 939.2,273.0 941.9,273.5 944.7,274.2 947.5,275.0 950.3,275.9 953.1,277.0 955.9,278.2 958.6,279.6 961.4,281.2 964.2,282.8 967.0,284.7 969.8,286.7 972.6,288.8 975.3,291.1 978.1,293.5 980.9,296.0 983.7,298.7 986.5,301.5 989.3,304.5 992.0,307.6 994.8,310.8 997.6,314.2 1000.4,317.7 1003.2,321.3 1006.0,325.0 1008.7,328.8 1011.5,332.8 1014.3,336.9 1017.1,341.1 1019.9,345.4 1022.7,349.8 1025.5,354.4 1028.2,359.0 1031.0,363.7 1033.8,368.5 1036.6,373.4 1039.4,378.4 1042.2,383.5 1044.9,388.7 1047.7,394.0 1050.5,399.3 1053.3,404.7 1056.1,410.2 1058.9,415.7 1061.6,421.3 1064.4,427.0 1067.2,432.7 1070.0,438.5 1072.8,444.4 1075.6,450.2 1078.3,456.2 1081.1,462.1 1083.9,468.1 1086.7,474.1 1089.5,480.2 1092.3,486.3 1095.0,492.4 1097.8,498.5 1100.6,504.6 1100.6,518.5 1212.0,518.5" fill="none" stroke="#ff00ff" stroke-width="1"/></g><g font-family='"Liberation Sans",sans-serif' font-size="14" fill="#c8c8c8" filter="url(#thr2)" letter-spacing="-0.1"><text x="49" y="225.6" text-anchor="end">-5.22V</text><text x="1270.5" y="225.6" text-anchor="end">540mA</text><text x="56.5" y="605" text-anchor="middle">0ms</text><text x="49" y="258.6" text-anchor="end">-5.31V</text><text x="1270.5" y="258.6" text-anchor="end">480mA</text><text x="161.5" y="605" text-anchor="middle">30ms</text><text x="49" y="291.6" text-anchor="end">-5.40V</text><text x="1270.5" y="291.6" text-anchor="end">420mA</text><text x="266.5" y="605" text-anchor="middle">60ms</text><text x="49" y="324.6" text-anchor="end">-5.49V</text><text x="1270.5" y="324.6" text-anchor="end">360mA</text><text x="371.5" y="605" text-anchor="middle">90ms</text><text x="49" y="357.6" text-anchor="end">-5.58V</text><text x="1270.5" y="357.6" text-anchor="end">300mA</text><text x="476.5" y="605" text-anchor="middle">120ms</text><text x="49" y="390.6" text-anchor="end">-5.67V</text><text x="1270.5" y="390.6" text-anchor="end">240mA</text><text x="581.5" y="605" text-anchor="middle">150ms</text><text x="49" y="423.6" text-anchor="end">-5.76V</text><text x="1270.5" y="423.6" text-anchor="end">180mA</text><text x="687.5" y="605" text-anchor="middle">180ms</text><text x="49" y="456.6" text-anchor="end">-5.85V</text><text x="1270.5" y="456.6" text-anchor="end">120mA</text><text x="792.5" y="605" text-anchor="middle">210ms</text><text x="49" y="489.6" text-anchor="end">-5.94V</text><text x="1270.5" y="489.6" text-anchor="end">60mA</text><text x="897.5" y="605" text-anchor="middle">240ms</text><text x="49" y="522.6" text-anchor="end">-6.03V</text><text x="1270.5" y="522.6" text-anchor="end">0mA</text><text x="1002.5" y="605" text-anchor="middle">270ms</text><text x="49" y="555.6" text-anchor="end">-6.12V</text><text x="1270.5" y="555.6" text-anchor="end">-60mA</text><text x="1107.5" y="605" text-anchor="middle">300ms</text><text x="49" y="588.6" text-anchor="end">-6.21V</text><text x="1270.5" y="588.6" text-anchor="end">-120mA</text><text x="1212.5" y="605" text-anchor="middle">330ms</text></g><g font-family='"Liberation Sans",sans-serif' font-size="13" font-weight="bold" text-anchor="middle" filter="url(#thr)"><text x="248" y="216" fill="#00ff00">V(bat)</text><text x="633" y="216" fill="#ff0000">V(in)</text><text x="1018" y="216" fill="#ff00ff">I(V2)</text></g></svg><div style="left:2px;top:616px;width:1276px;height:438px;background:#d4d0c8;box-shadow:inset -1px -1px 0 #404040,inset 1px 1px 0 #d4d0c8,inset -2px -2px 0 #808080,inset 2px 2px 0 #fff;"></div><div style="left:6px;top:620px;width:1268px;height:18px;background:linear-gradient(to right,#0a246a 0%,#a6caf0 100%);"></div><svg style="left:8px;top:621px" width="16" height="16" viewBox="0 0 16 16"><g shape-rendering="crispEdges"><path d="M10 0h1v1h-1zM9 1h1v1h-1zM8 2h1v1h-1zM4 3h2v1h-2zM7 3h1v1h-1zM4 4h3v1h-3zM4 5h2v1h-2zM4 6h2v1h-2zM1 7h5v1h-5zM4 8h2v1h-2zM4 9h2v1h-2zM4 10h3v1h-3zM4 11h2v1h-2zM7 11h1v1h-1zM8 12h1v1h-1zM10 12h1v1h-1zM9 13h2v1h-2zM8 14h3v1h-3z" fill="#0000ff"/></g></svg><div class="t" style="left:25px;top:623px;font-family:'DejaVu Sans Condensed','DejaVu Sans','Liberation Sans',sans-serif;font-size:11px;color:#fff;white-space:nowrap;line-height:14px;height:14px;font-weight:bold;">SyntDiode.asc</div><div style="left:1256px;top:622px;width:16px;height:14px;background:#d4d0c8;box-shadow:inset -1px -1px 0 #404040,inset 1px 1px 0 #fff,inset -2px -2px 0 #808080;"><svg style="left:4px;top:3px" width="8" height="7" viewBox="0 0 8 7" shape-rendering="crispEdges"><path d="M0 0h2v1h1v1h2v-1h1v-1h2v1h-1v1h-1v1h-1v1h1v1h1v1h1v1h-2v-1h-1v-1h-2v1h-1v1h-2v-1h1v-1h1v-1h1v-1h-1v-1h-1v-1h-1z" fill="#000"/></svg></div><div style="left:1238px;top:622px;width:16px;height:14px;background:#d4d0c8;box-shadow:inset -1px -1px 0 #404040,inset 1px 1px 0 #fff,inset -2px -2px 0 #808080;"><div style="left:3px;top:2px;width:9px;height:9px;box-sizing:border-box;border:1px solid #000;border-top-width:2px"></div></div><div style="left:1222px;top:622px;width:16px;height:14px;background:#d4d0c8;box-shadow:inset -1px -1px 0 #404040,inset 1px 1px 0 #fff,inset -2px -2px 0 #808080;"><div style="left:4px;top:9px;width:6px;height:2px;background:#000"></div></div><div style="left:6px;top:639px;width:1268px;height:411px;box-shadow:inset -1px -1px 0 #fff,inset 1px 1px 0 #808080,inset -2px -2px 0 #d4d0c8,inset 2px 2px 0 #404040;"></div><svg style="left:8px;top:641px" width="1264" height="407" viewBox="8 641 1264 407"><rect x="8" y="641" width="1264" height="407" fill="#fff"/><path d="M382 670.5H528M527.5 670V1010M382.5 675V1010M760 670.5H858M857.5 670V836M858 835.5H760M760.5 836V670" fill="none" stroke="#000080" stroke-width="1" stroke-dasharray="9 6 3 6" shape-rendering="crispEdges"/><path d="M469.5 778.5L469.5 689.5L809.5 689.5L809.5 710.5M469.5 824.5L469.5 884.5M469.5 931.5L469.5 1000.5M547.5 689.5L547.5 840.5M547.5 869.5L547.5 1000.5M663.5 757.5L595.5 757.5L595.5 816.5M595.5 863.5L595.5 903.5L809.5 903.5M595.5 786.5L634.5 786.5L634.5 923.5M634.5 970.5L634.5 1000.5M663.5 777.5L653.5 777.5L653.5 787.5M653.5 834.5L653.5 844.5L867.5 844.5M682.5 689.5L682.5 749.5M682.5 786.5L682.5 844.5M731.5 689.5L731.5 709.5M702.5 767.5L741.5 767.5L741.5 922.5L780.5 922.5M809.5 756.5L809.5 768.5M809.5 815.5L809.5 856.5M809.5 903.5L809.5 910.5M809.5 972.5L809.5 1000.5M720.5 709.5L742.5 709.5L731.5 720.5L720.5 709.5M868.5 845.5L875.5 837.5L906.5 837.5L914.5 845.5L906.5 853.5L875.5 853.5L868.5 845.5M868.5 1000.5L875.5 992.5L894.5 992.5L901.5 1000.5" fill="none" stroke="#0000ff" stroke-width="1" stroke-linejoin="bevel" shape-rendering="crispEdges"/><rect x="545" y="687" width="5" height="5" fill="#0000ff" shape-rendering="crispEdges"/><rect x="680" y="687" width="5" height="5" fill="#0000ff" shape-rendering="crispEdges"/><rect x="729" y="687" width="5" height="5" fill="#0000ff" shape-rendering="crispEdges"/><rect x="593" y="784" width="5" height="5" fill="#0000ff" shape-rendering="crispEdges"/><rect x="680" y="842" width="5" height="5" fill="#0000ff" shape-rendering="crispEdges"/><rect x="807" y="842" width="5" height="5" fill="#0000ff" shape-rendering="crispEdges"/><rect x="807" y="901" width="5" height="5" fill="#0000ff" shape-rendering="crispEdges"/><path d="M469.5 778V782M469.5 818V825M464 789.5H475M469.5 784V795M464 813.5H475M809.5 710V714M809.5 750V757M804 721.5H815M809.5 716V727M804 745.5H815M469.5 884.5L469.5 888.5L479.5 893.5L459.5 903.5L479.5 912.5L459.5 922.5L469.5 927.5L469.5 931.5M595.5 816.5L595.5 820.5L605.5 825.5L585.5 835.5L605.5 844.5L585.5 854.5L595.5 859.5L595.5 863.5M653.5 787.5L653.5 791.5L663.5 796.5L643.5 806.5L663.5 815.5L643.5 825.5L653.5 830.5L653.5 834.5M634.5 923.5L634.5 927.5L644.5 932.5L624.5 942.5L644.5 951.5L624.5 961.5L634.5 966.5L634.5 970.5M809.5 768.5L809.5 772.5L819.5 777.5L799.5 787.5L819.5 796.5L799.5 806.5L809.5 811.5L809.5 815.5M809.5 856.5L809.5 860.5L819.5 865.5L799.5 875.5L819.5 884.5L799.5 894.5L809.5 899.5L809.5 903.5M547.5 840.5L547.5 852.5M537 852.5H557M537 857.5H557M547.5 857.5L547.5 869.5M663.5 747.5L702.5 767.5L663.5 786.5L663.5 747.5M665.5 757.5L671.5 757.5M665.5 777.5L671.5 777.5M668.5 774.5L668.5 780.5M682.5 749.5L682.5 757.5M682.5 777.5L682.5 786.5M685.5 755.5L691.5 755.5M688.5 752.5L688.5 758.5M685.5 779.5L691.5 779.5M780.5 922.5L784.5 922.5M784.5 922.5L784.5 961.5M789.5 917V928M789.5 937V947M789.5 956V967M789.5 922.5L809.5 922.5M809.5 910.5L809.5 942.5L789.5 942.5M789.5 961.5L809.5 961.5L809.5 972.5M793 941.5H798M797 940.5H802M793 943.5H798M797 944.5H802M801.5 939V940M801.5 945V946M802.5 939.5L805.5 939.5L805.5 945.5L802.5 945.5" fill="none" stroke="#0000c0" stroke-width="1" stroke-linejoin="bevel" shape-rendering="crispEdges"/><circle cx="469" cy="800" r="18.5" fill="none" stroke="#0000c0" stroke-width="1" shape-rendering="crispEdges"/><circle cx="809" cy="732" r="18.5" fill="none" stroke="#0000c0" stroke-width="1" shape-rendering="crispEdges"/><g filter="url(#thr)" font-family='"Liberation Sans",sans-serif' font-size="14" font-weight="bold" fill="#000"><text x="438.5" y="782" textLength="14.38" lengthAdjust="spacingAndGlyphs">V1</text><text x="376.9" y="835" textLength="76.85" lengthAdjust="spacingAndGlyphs">SINE(6 0.5 5)</text><text x="480.41" y="903" textLength="15.11" lengthAdjust="spacingAndGlyphs">R1</text><text x="481.23" y="925" textLength="6.56" lengthAdjust="spacingAndGlyphs">1</text><text x="552.0" y="844.5" textLength="15.03" lengthAdjust="spacingAndGlyphs">C1</text><text x="551.13" y="879" textLength="27.25" lengthAdjust="spacingAndGlyphs">100µ</text><text x="607.16" y="835" textLength="15.06" lengthAdjust="spacingAndGlyphs">R5</text><text x="607.11" y="857" textLength="22.9" lengthAdjust="spacingAndGlyphs">10K</text><text x="646.11" y="941.5" textLength="15.95" lengthAdjust="spacingAndGlyphs">R6</text><text x="646.04" y="963.5" textLength="34.22" lengthAdjust="spacingAndGlyphs">1Meg</text><text x="664.7" y="806" textLength="16.12" lengthAdjust="spacingAndGlyphs">R3</text><text x="664.71" y="828" textLength="22.9" lengthAdjust="spacingAndGlyphs">10K</text><text x="691.91" y="752" textLength="15.05" lengthAdjust="spacingAndGlyphs">U1</text><text x="691.82" y="791" textLength="43.99" lengthAdjust="spacingAndGlyphs">LT1716</text><text x="823.5" y="714" textLength="14.61" lengthAdjust="spacingAndGlyphs">V2</text><text x="823.0" y="766.5" textLength="7.13" lengthAdjust="spacingAndGlyphs">6</text><text x="821.11" y="786" textLength="15.95" lengthAdjust="spacingAndGlyphs">R2</text><text x="821.0" y="808" textLength="16.91" lengthAdjust="spacingAndGlyphs">0.1</text><text x="780.18" y="871" textLength="15.04" lengthAdjust="spacingAndGlyphs">R4</text><text x="763.75" y="893" textLength="31.69" lengthAdjust="spacingAndGlyphs">0.015</text><text x="812.84" y="932" textLength="62.61" lengthAdjust="spacingAndGlyphs">FDS6699S</text><text x="812.86" y="956" textLength="17.29" lengthAdjust="spacingAndGlyphs">M1</text><text x="876.35" y="850" textLength="21.54" lengthAdjust="spacingAndGlyphs">Bat</text><text x="876.45" y="1006" textLength="11.96" lengthAdjust="spacingAndGlyphs">In</text><text x="425.8" y="660" textLength="51.37" lengthAdjust="spacingAndGlyphs" fill="#0000c8">Cellules</text><text x="778.79" y="660" textLength="49.84" lengthAdjust="spacingAndGlyphs" fill="#0000c8">Batterie</text></g></svg></div></div>
</div></body></html>
